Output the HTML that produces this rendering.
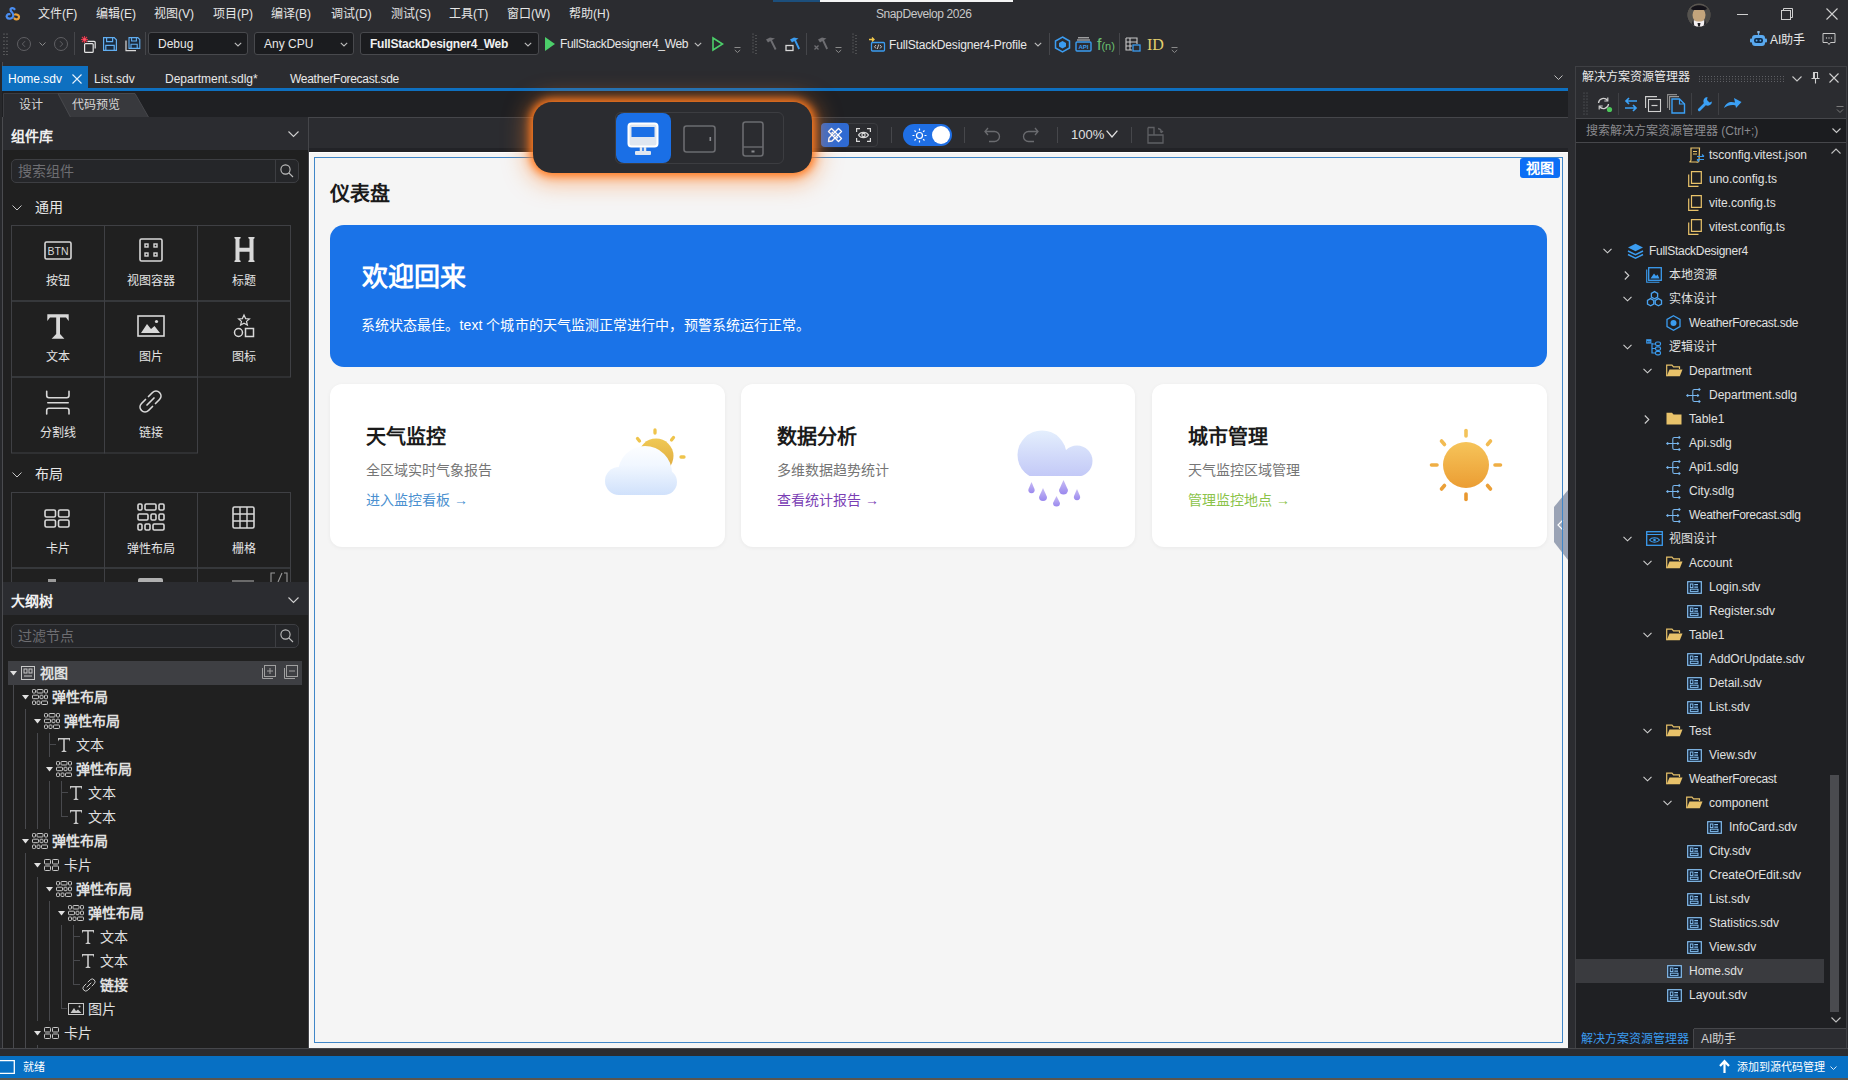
<!DOCTYPE html>
<html lang="zh-CN"><head><meta charset="utf-8"><title>SnapDevelop</title>
<style>
*{margin:0;padding:0;box-sizing:border-box}
html,body{width:1853px;height:1080px;overflow:hidden}
body{background:#2b2c30;font-family:"Liberation Sans",sans-serif;font-size:12px;color:#dcdcdc;position:relative}
.a{position:absolute}
.t{position:absolute;white-space:nowrap;line-height:1}
svg{position:absolute;overflow:visible}

</style></head><body>
<!-- title bar -->
<div class="a" style="left:773px;top:0;width:47px;height:2px;background:#1c4f7c"></div>
<div class="a" style="left:820px;top:0;width:193px;height:2px;background:#f4f4f4"></div>
<svg style="left:5px;top:7px" width="16" height="14" viewBox="0 0 16 14">
 <path d="M9.5 2.2 C8.5 0.6 5.2 0.8 5.6 3.2 C5.9 5 8.5 5.5 8.3 8.5 C8.1 11.8 3.5 12.6 2 10.5 C0.8 8.8 2.5 6.8 4.5 7.2" fill="none" stroke="#4a8df0" stroke-width="2.2" stroke-linecap="round"/>
 <path d="M10 7.5 C13.5 7.2 14.5 9.5 13.8 11 C13 12.8 10.5 12.8 9.5 11.5" fill="none" stroke="#e8a13a" stroke-width="2.2" stroke-linecap="round"/>
</svg>
<div class="t" style="left:38px;top:8px;font-size:12px;color:#e6e6e6">文件(F)</div>
<div class="t" style="left:96px;top:8px;font-size:12px;color:#e6e6e6">编辑(E)</div>
<div class="t" style="left:154px;top:8px;font-size:12px;color:#e6e6e6">视图(V)</div>
<div class="t" style="left:213px;top:8px;font-size:12px;color:#e6e6e6">项目(P)</div>
<div class="t" style="left:271px;top:8px;font-size:12px;color:#e6e6e6">编译(B)</div>
<div class="t" style="left:331px;top:8px;font-size:12px;color:#e6e6e6">调试(D)</div>
<div class="t" style="left:391px;top:8px;font-size:12px;color:#e6e6e6">测试(S)</div>
<div class="t" style="left:449px;top:8px;font-size:12px;color:#e6e6e6">工具(T)</div>
<div class="t" style="left:507px;top:8px;font-size:12px;color:#e6e6e6">窗口(W)</div>
<div class="t" style="left:569px;top:8px;font-size:12px;color:#e6e6e6">帮助(H)</div>
<div class="t" style="left:876px;top:8px;font-size:12px;letter-spacing:-0.41px;color:#c8c8c8">SnapDevelop 2026</div>
<!-- avatar -->
<svg style="left:1687px;top:3px" width="24" height="24" viewBox="0 0 24 24"><defs><clipPath id="avc"><circle cx="12" cy="12" r="11.5"/></clipPath></defs>
<g clip-path="url(#avc)"><rect width="24" height="24" fill="#5a5650"/><rect x="0" y="0" width="6" height="24" fill="#55534f"/><rect x="18" y="0" width="6" height="24" fill="#4d4b48"/>
<ellipse cx="12" cy="12" rx="6.5" ry="7.5" fill="#c4a57c"/><path d="M4 6C6 1 18 1 20 6L18 7H6Z" fill="#15131a"/>
<path d="M6 25L7 17C9 19 15 19 17 17L18 25Z" fill="#f4f0f2"/><path d="M10.5 20H13.5L12.5 25H11.5Z" fill="#1a1a1e"/><path d="M3 25L6 17 8 25ZM21 25L18 17 16 25Z" fill="#2a2a2e"/></g></svg>
<!-- window buttons -->
<div class="a" style="left:1737px;top:14px;width:11px;height:1px;background:#d0d0d0"></div>
<svg style="left:1781px;top:8px" width="12" height="12" viewBox="0 0 12 12"><rect x="0.5" y="2.5" width="9" height="9" fill="none" stroke="#d0d0d0"/><path d="M2.5 2.5V0.5H11.5V9.5H9.5" fill="none" stroke="#d0d0d0"/></svg>
<svg style="left:1826px;top:8px" width="12" height="12" viewBox="0 0 12 12"><path d="M0.5 0.5L11.5 11.5M11.5 0.5L0.5 11.5" stroke="#d0d0d0" stroke-width="1.1"/></svg>
<!-- toolbar -->
<svg style="left:3px;top:33px" width="6" height="22" viewBox="0 0 6 22"><g fill="#8a8a8a"><circle cx="1" cy="1" r=".6"/><circle cx="4" cy="1" r=".6"/><circle cx="1" cy="4.5" r=".6"/><circle cx="4" cy="4.5" r=".6"/><circle cx="1" cy="8" r=".6"/><circle cx="4" cy="8" r=".6"/><circle cx="1" cy="11.5" r=".6"/><circle cx="4" cy="11.5" r=".6"/><circle cx="1" cy="15" r=".6"/><circle cx="4" cy="15" r=".6"/><circle cx="1" cy="18.5" r=".6"/><circle cx="4" cy="18.5" r=".6"/><circle cx="1" cy="21.5" r=".6"/><circle cx="4" cy="21.5" r=".6"/></g></svg>
<svg style="left:17px;top:37px" width="14" height="14" viewBox="0 0 14 14"><circle cx="7" cy="7" r="6.5" fill="none" stroke="#5f5f63"/><path d="M8 4.2L5.3 7 8 9.8" fill="none" stroke="#5f5f63"/></svg>
<svg style="left:39px;top:42px" width="7" height="5" viewBox="0 0 7 5"><path d="M.5 .5L3.5 3.5 6.5 .5" fill="none" stroke="#8a8a8a"/></svg>
<svg style="left:54px;top:37px" width="14" height="14" viewBox="0 0 14 14"><circle cx="7" cy="7" r="6.5" fill="none" stroke="#5f5f63"/><path d="M6 4.2L8.7 7 6 9.8" fill="none" stroke="#5f5f63"/></svg>
<div class="a" style="left:74px;top:32px;width:1px;height:23px;background:#45464a"></div>
<svg style="left:80px;top:35px" width="17" height="18" viewBox="0 0 17 18"><g stroke="#e0364a" stroke-width="1.1"><path d="M4.5 1V8M1 4.5H8M2 2L7 7M7 2L2 7"/></g><circle cx="4.5" cy="4.5" r="1.2" fill="#ff5a6a"/><rect x="4.6" y="8.6" width="8.6" height="8.8" rx="1" fill="none" stroke="#e4e4e4" stroke-width="1.2"/><path d="M7.5 6.4H14.2Q15.2 6.4 15.2 7.4V13.4" fill="none" stroke="#e4e4e4" stroke-width="1.2"/></svg>
<svg style="left:102px;top:36px" width="16" height="16" viewBox="0 0 16 16"><path d="M1.6 1.6H12.2L14.4 3.8V14.4H1.6Z" fill="#1b2a3c" stroke="#62aef0" stroke-width="1.2"/><path d="M4.6 1.8V5.6H10.6V1.8M3.8 14.2V9.4H12.2V14.2" fill="none" stroke="#62aef0" stroke-width="1.2"/></svg>
<svg style="left:124px;top:36px" width="17" height="16" viewBox="0 0 17 16"><path d="M5 1.6H13.8L15.8 3.6V12.4H5Z" fill="#1b2a3c" stroke="#62aef0" stroke-width="1.1"/><path d="M7.6 1.8V5H12.4V1.8M7 12.2V8.2H13.2V12.2" fill="none" stroke="#62aef0" stroke-width="1.1"/><path d="M2 4.5V14.6H12" fill="none" stroke="#d8d8d8" stroke-width="1.2"/></svg>
<div class="a" style="left:145px;top:32px;width:1px;height:23px;background:#45464a"></div>
<div class="a" style="left:148px;top:32px;width:100px;height:23px;background:#1b1c1f;border:1px solid #48494d;border-radius:3px"></div>
<div class="t" style="left:158px;top:38px;font-size:12px;color:#e8e8e8">Debug</div>
<svg style="left:234px;top:42px" width="8" height="5" viewBox="0 0 8 5"><path d="M.8 .8L4 4 7.2 .8" fill="none" stroke="#bdbdbd" stroke-width="1.1"/></svg>
<div class="a" style="left:254px;top:32px;width:100px;height:23px;background:#1b1c1f;border:1px solid #48494d;border-radius:3px"></div>
<div class="t" style="left:264px;top:38px;font-size:12px;color:#e8e8e8">Any CPU</div>
<svg style="left:340px;top:42px" width="8" height="5" viewBox="0 0 8 5"><path d="M.8 .8L4 4 7.2 .8" fill="none" stroke="#bdbdbd" stroke-width="1.1"/></svg>
<div class="a" style="left:360px;top:32px;width:179px;height:23px;background:#1b1c1f;border:1px solid #48494d;border-radius:3px"></div>
<div class="t" style="left:370px;top:38px;font-size:12px;font-weight:bold;letter-spacing:-0.23px;color:#f0f0f0">FullStackDesigner4_Web</div>
<svg style="left:524px;top:42px" width="8" height="5" viewBox="0 0 8 5"><path d="M.8 .8L4 4 7.2 .8" fill="none" stroke="#bdbdbd" stroke-width="1.1"/></svg>
<svg style="left:545px;top:37px" width="10" height="14" viewBox="0 0 10 14"><path d="M0 0L10 7 0 14Z" fill="#4ccf6a"/></svg>
<div class="t" style="left:560px;top:38px;font-size:12px;letter-spacing:-0.32px;color:#e8e8e8">FullStackDesigner4_Web</div>
<svg style="left:694px;top:42px" width="8" height="5" viewBox="0 0 8 5"><path d="M.8 .8L4 4 7.2 .8" fill="none" stroke="#bdbdbd" stroke-width="1.1"/></svg>
<svg style="left:712px;top:37px" width="12" height="14" viewBox="0 0 12 14"><path d="M1 1L10.5 7 1 13Z" fill="none" stroke="#4ccf6a" stroke-width="1.6"/></svg>
<svg style="left:734px;top:47px" width="7" height="7" viewBox="0 0 7 7"><path d="M.5 .5H6.5M.8 3L3.5 5.5 6.2 3" fill="none" stroke="#8a8a8a"/></svg>
<svg style="left:752px;top:33px" width="5" height="22" viewBox="0 0 5 22"><g fill="#7a7a7a"><circle cx="1" cy="1" r=".6"/><circle cx="4" cy="2.5" r=".6"/><circle cx="1" cy="4" r=".6"/><circle cx="4" cy="5.5" r=".6"/><circle cx="1" cy="7" r=".6"/><circle cx="4" cy="8.5" r=".6"/><circle cx="1" cy="10" r=".6"/><circle cx="4" cy="11.5" r=".6"/><circle cx="1" cy="13" r=".6"/><circle cx="4" cy="14.5" r=".6"/><circle cx="1" cy="16" r=".6"/><circle cx="4" cy="17.5" r=".6"/><circle cx="1" cy="19" r=".6"/><circle cx="4" cy="20.5" r=".6"/></g></svg>
<svg style="left:764px;top:36px" width="14" height="15" viewBox="0 0 14 15"><path d="M2 3.5L6 1.5 11 2.5 8 4 12.5 13 10.8 14 6.3 5 4 6.5Z" fill="#6e6e72"/></svg>
<svg style="left:785px;top:36px" width="16" height="16" viewBox="0 0 16 16"><path d="M5 3.5L9 1.5 13.5 2.5 11 4 15 12.5 13.3 13.5 9.3 5 7 6.5Z" fill="#3b9cf0"/><rect x="1" y="9.5" width="7" height="5" fill="none" stroke="#d8d8d8" stroke-width="1.3"/></svg>
<div class="a" style="left:806px;top:33px;width:1px;height:22px;background:#45464a"></div>
<svg style="left:813px;top:36px" width="16" height="16" viewBox="0 0 16 16"><path d="M5 3.5L9 1.5 13.5 2.5 11 4 15 12.5 13.3 13.5 9.3 5 7 6.5Z" fill="#6e6e72"/><path d="M1.5 9.5L5.5 13.5M5.5 9.5L1.5 13.5" stroke="#6e6e72" stroke-width="1.3"/></svg>
<svg style="left:835px;top:47px" width="7" height="7" viewBox="0 0 7 7"><path d="M.5 .5H6.5M.8 3L3.5 5.5 6.2 3" fill="none" stroke="#8a8a8a"/></svg>
<svg style="left:852px;top:33px" width="5" height="22" viewBox="0 0 5 22"><g fill="#7a7a7a"><circle cx="1" cy="1" r=".6"/><circle cx="4" cy="2.5" r=".6"/><circle cx="1" cy="4" r=".6"/><circle cx="4" cy="5.5" r=".6"/><circle cx="1" cy="7" r=".6"/><circle cx="4" cy="8.5" r=".6"/><circle cx="1" cy="10" r=".6"/><circle cx="4" cy="11.5" r=".6"/><circle cx="1" cy="13" r=".6"/><circle cx="4" cy="14.5" r=".6"/><circle cx="1" cy="16" r=".6"/><circle cx="4" cy="17.5" r=".6"/><circle cx="1" cy="19" r=".6"/><circle cx="4" cy="20.5" r=".6"/></g></svg>
<svg style="left:868px;top:36px" width="18" height="16" viewBox="0 0 18 16"><path d="M1 3.5H6M4 1.5L6 3.5 4 5.5" fill="none" stroke="#f2c94c" stroke-width="1.3"/><rect x="3.5" y="6.5" width="13" height="8.5" rx="1" fill="none" stroke="#3b9cf0" stroke-width="1.3"/><path d="M8 9L6.5 10.8 8 12.5M12 9L13.5 10.8 12 12.5M10.7 8.5L9.3 13" fill="none" stroke="#d8d8d8" stroke-width=".9"/></svg>
<div class="t" style="left:889px;top:39px;font-size:12px;letter-spacing:-0.17px;color:#e8e8e8">FullStackDesigner4-Profile</div>
<svg style="left:1034px;top:42px" width="8" height="5" viewBox="0 0 8 5"><path d="M.8 .8L4 4 7.2 .8" fill="none" stroke="#bdbdbd" stroke-width="1.1"/></svg>
<div class="a" style="left:1049px;top:33px;width:1px;height:22px;background:#45464a"></div>
<svg style="left:1054px;top:36px" width="17" height="17" viewBox="0 0 17 17"><path d="M8.5 1L15.5 5V12L8.5 16 1.5 12V5Z" fill="none" stroke="#3b9cf0" stroke-width="1.5"/><path d="M8.5 5L12 7V10.5L8.5 12.5 5 10.5V7Z" fill="#3b9cf0"/></svg>
<svg style="left:1075px;top:37px" width="17" height="15" viewBox="0 0 17 15"><path d="M3 .8H14M2 3H15" stroke="#d0d0d0" stroke-width="1"/><rect x="1" y="5" width="15" height="9" rx="1" fill="none" stroke="#3b9cf0" stroke-width="1.4"/><text x="8.5" y="12.3" font-size="6" font-family="Liberation Sans" font-weight="bold" fill="#3b9cf0" text-anchor="middle">API</text></svg>
<div class="t" style="left:1097px;top:37px;font-size:16px;color:#6cc070">f<span style="font-size:11px">(n)</span></div>
<div class="a" style="left:1119px;top:33px;width:1px;height:22px;background:#45464a"></div>
<svg style="left:1125px;top:37px" width="16" height="15" viewBox="0 0 16 15"><path d="M1 1H12V7M1 1V13H7M1 5H12M1 9H7M5 1V13" fill="none" stroke="#c8c8c8" stroke-width="1.1"/><rect x="8" y="8" width="7" height="6" fill="none" stroke="#3b9cf0" stroke-width="1.3"/></svg>
<div class="t" style="left:1147px;top:37px;font-size:16px;font-family:'Liberation Serif',serif;color:#e3cf6e">ID</div>
<svg style="left:1171px;top:47px" width="7" height="7" viewBox="0 0 7 7"><path d="M.5 .5H6.5M.8 3L3.5 5.5 6.2 3" fill="none" stroke="#8a8a8a"/></svg>
<!-- AI helper -->
<svg style="left:1750px;top:31px" width="17" height="16" viewBox="0 0 17 16"><rect x="7.3" y="0" width="2.4" height="2.2" fill="#8fb8dc"/><path d="M8.5 2V4" stroke="#5aaaf0" stroke-width="1.2"/><rect x="2" y="4" width="13" height="11" rx="3" fill="#5aaaf0"/><rect x="0" y="7.5" width="2.5" height="4" rx="1" fill="#5aaaf0"/><rect x="14.5" y="7.5" width="2.5" height="4" rx="1" fill="#5aaaf0"/><rect x="4" y="7" width="9" height="5" rx="2.2" fill="#0f2d4c"/><circle cx="6.6" cy="9.5" r=".9" fill="#5aaaf0"/><circle cx="10.4" cy="9.5" r=".9" fill="#5aaaf0"/></svg>
<div class="t" style="left:1770px;top:34px;font-size:12px;color:#e8e8e8">AI助手</div>
<svg style="left:1822px;top:33px" width="14" height="13" viewBox="0 0 14 13"><path d="M1 .5H13V9.5H8.5L7 11.5 5.5 9.5H1Z" fill="none" stroke="#c8c8c8"/><g fill="#c8c8c8"><circle cx="4.5" cy="5" r=".7"/><circle cx="7" cy="5" r=".7"/><circle cx="9.5" cy="5" r=".7"/></g></svg>
<!-- document tabs -->
<div class="a" style="left:0;top:62px;width:2px;height:987px;background:#27282b"></div><div class="a" style="left:2px;top:62px;width:1px;height:987px;background:#4a4b4f"></div>
<div class="a" style="left:2px;top:66px;width:86px;height:22px;background:#0e70c0"></div>
<div class="t" style="left:8px;top:73px;font-size:12px;color:#ffffff">Home.sdv</div>
<svg style="left:72px;top:74px" width="10" height="10" viewBox="0 0 10 10"><path d="M.5 .5L9.5 9.5M9.5 .5L.5 9.5" stroke="#e8f2fb" stroke-width="1.1"/></svg>
<div class="t" style="left:94px;top:73px;font-size:12px;color:#e8e8e8">List.sdv</div>
<div class="t" style="left:165px;top:73px;font-size:12px;color:#e8e8e8">Department.sdlg*</div>
<div class="t" style="left:290px;top:73px;font-size:12px;letter-spacing:-0.29px;color:#e8e8e8">WeatherForecast.sde</div>
<svg style="left:1554px;top:75px" width="9" height="5" viewBox="0 0 9 5"><path d="M.5 .5L4.5 4.5 8.5 .5" fill="none" stroke="#bdbdbd" stroke-width="1"/></svg>
<div class="a" style="left:2px;top:88px;width:1566px;height:3px;background:#0e70c0"></div>
<!-- design/code row -->
<div class="a" style="left:2px;top:91px;width:1566px;height:26px;background:#1f2023"></div>
<svg style="left:2px;top:92px" width="150" height="26" viewBox="0 0 150 26">
 <path d="M1.5 26V1.5H56L69 26Z" fill="#2b2c30" stroke="#3c3d41"/>
 <path d="M56 1.5H133L147 26H69Z" fill="#38393d" stroke="#46474b"/>
</svg>
<div class="t" style="left:19px;top:99px;font-size:12px;color:#d8d8d8">设计</div>
<div class="t" style="left:72px;top:99px;font-size:12px;color:#d8d8d8">代码预览</div>
<div class="a" style="left:71px;top:117px;width:1497px;height:1px;background:#45464a"></div>
<!-- left panel -->
<div class="a" style="left:3px;top:118px;width:305px;height:930px;background:#202020"></div>
<div class="a" style="left:308px;top:117px;width:1px;height:931px;background:#45464a"></div>
<div class="a" style="left:3px;top:117px;width:305px;height:33px;background:#2b2c30"></div>
<div class="t" style="left:11px;top:129px;font-size:14px;font-weight:bold;color:#f0f0f0">组件库</div>
<svg style="left:288px;top:131px" width="11" height="6" viewBox="0 0 11 6"><path d="M.5 .5L5.5 5.5 10.5 .5" fill="none" stroke="#d0d0d0" stroke-width="1.1"/></svg>
<div class="a" style="left:11px;top:159px;width:288px;height:24px;background:#252629;border:1px solid #3d3e42;border-radius:5px"></div>
<div class="a" style="left:275px;top:160px;width:1px;height:22px;background:#3d3e42"></div>
<div class="t" style="left:18px;top:164px;font-size:14px;color:#6e6e72">搜索组件</div>
<svg style="left:280px;top:164px" width="14" height="14" viewBox="0 0 14 14"><circle cx="5.5" cy="5.5" r="4.6" fill="none" stroke="#c0c0c0" stroke-width="1.1"/><path d="M8.8 8.8L13 13" stroke="#c0c0c0" stroke-width="1.1"/></svg>
<svg style="left:12px;top:205px" width="10" height="6" viewBox="0 0 10 6"><path d="M.5 .5L5 5 9.5 .5" fill="none" stroke="#c8c8c8" stroke-width="1"/></svg>
<div class="t" style="left:35px;top:200px;font-size:14px;color:#e8e8e8">通用</div>
<div class="a" style="left:0;top:0;width:310px;height:582px;overflow:hidden"><svg style="left:0;top:0" width="310" height="600" viewBox="0 0 310 600"><rect x="11.5" y="225.5" width="93.0" height="75.5" fill="none" stroke="#3f4044"/><rect x="104.5" y="225.5" width="93.0" height="75.5" fill="none" stroke="#3f4044"/><rect x="197.5" y="225.5" width="93.0" height="75.5" fill="none" stroke="#3f4044"/><rect x="11.5" y="301" width="93.0" height="76" fill="none" stroke="#3f4044"/><rect x="104.5" y="301" width="93.0" height="76" fill="none" stroke="#3f4044"/><rect x="197.5" y="301" width="93.0" height="76" fill="none" stroke="#3f4044"/><rect x="11.5" y="377" width="93.0" height="76" fill="none" stroke="#3f4044"/><rect x="104.5" y="377" width="93.0" height="76" fill="none" stroke="#3f4044"/><rect x="11.5" y="492.5" width="93.0" height="75.5" fill="none" stroke="#3f4044"/><rect x="104.5" y="492.5" width="93.0" height="75.5" fill="none" stroke="#3f4044"/><rect x="197.5" y="492.5" width="93.0" height="75.5" fill="none" stroke="#3f4044"/><rect x="11.5" y="568" width="93.0" height="75" fill="none" stroke="#3f4044"/><rect x="104.5" y="568" width="93.0" height="75" fill="none" stroke="#3f4044"/><rect x="197.5" y="568" width="93.0" height="75" fill="none" stroke="#3f4044"/></svg>
<svg style="left:44px;top:241px" width="28" height="19" viewBox="0 0 28 19"><rect x="1" y="1" width="26" height="17" rx="1.5" fill="none" stroke="#d8d8d8" stroke-width="1.6"/><text x="14" y="14" font-size="10.5" font-family="Liberation Sans" fill="#d8d8d8" text-anchor="middle">BTN</text></svg>
<svg style="left:139px;top:238px" width="24" height="24" viewBox="0 0 24 24"><rect x="1" y="1" width="22" height="22" rx="1.5" fill="none" stroke="#d8d8d8" stroke-width="1.6"/><g fill="none" stroke="#d8d8d8" stroke-width="1.4"><rect x="6" y="6" width="3" height="3"/><rect x="15" y="6" width="3" height="3"/><rect x="6" y="15" width="3" height="3"/><rect x="15" y="15" width="3" height="3"/></g></svg>
<svg style="left:233.7px;top:237.4px" width="21" height="25" viewBox="0 0 20.3 24.8"><path d="M0.2 0H6.3V1.2L5.2 1.9V10.7H15.1V1.9L14 1.2V0H20.1V1.2L19.1 1.9V22.9L20.1 23.6V24.8H14V23.6L15.1 22.9V14.7H5.2V22.9L6.3 23.6V24.8H0.2V23.6L1.2 22.9V1.9L0.2 1.2Z" fill="#d8d8d8"/></svg>
<svg style="left:47px;top:313.7px" width="22" height="25" viewBox="0 0 22 24.6"><path d="M0.3 0H21.7V6.8L19 3.4H13V19.8L17.4 24.6H4.6L9.2 19.8V3.4H3L0.3 6.8Z" fill="#d8d8d8"/></svg>
<svg style="left:137px;top:315px" width="28" height="22" viewBox="0 0 28 22"><rect x="1" y="1" width="26" height="20" fill="none" stroke="#d8d8d8" stroke-width="1.6"/><path d="M4 18L10 9 14 14 17.5 11 23 18Z" fill="#d8d8d8"/><circle cx="19.5" cy="6.5" r="1.6" fill="#d8d8d8"/></svg>
<svg style="left:233px;top:314px" width="22" height="24" viewBox="0 0 22 24"><path d="M11 1L12.6 4.6 16.4 4.9 13.5 7.4 14.4 11.1 11 9.2 7.6 11.1 8.5 7.4 5.6 4.9 9.4 4.6Z" fill="none" stroke="#d8d8d8" stroke-width="1.2"/><circle cx="5.5" cy="18.5" r="4" fill="none" stroke="#d8d8d8" stroke-width="1.5"/><rect x="12.5" y="14.5" width="8" height="8" fill="none" stroke="#d8d8d8" stroke-width="1.5"/></svg>
<svg style="left:45px;top:390px" width="26" height="26" viewBox="0 0 26 26"><path d="M1.7 1.3V5.5Q1.7 7.7 3.9 7.7H21.8Q24 7.7 24 5.5V1.3M2.8 12.7H23.2M1.7 24V20.5Q1.7 18.3 3.9 18.3H21.8Q24 18.3 24 20.5V24" fill="none" stroke="#d8d8d8" stroke-width="1.6" stroke-linecap="round"/></svg>
<svg style="left:138px;top:389px" width="25" height="25" viewBox="0 0 25 25"><path d="M10.5 7.5L14.5 3.5A4.5 4.5 0 0 1 21.5 10.5L17.5 14.5M14.5 17.5L10.5 21.5A4.5 4.5 0 0 1 3.5 14.5L7.5 10.5M9 16L16 9" fill="none" stroke="#d8d8d8" stroke-width="1.7" stroke-linecap="round"/></svg>
<div class="t" style="left:46px;top:275px;font-size:12px;color:#e4e4e4">按钮</div>
<div class="t" style="left:127px;top:275px;font-size:12px;color:#e4e4e4">视图容器</div>
<div class="t" style="left:232px;top:275px;font-size:12px;color:#e4e4e4">标题</div>
<div class="t" style="left:46px;top:351px;font-size:12px;color:#e4e4e4">文本</div>
<div class="t" style="left:139px;top:351px;font-size:12px;color:#e4e4e4">图片</div>
<div class="t" style="left:232px;top:351px;font-size:12px;color:#e4e4e4">图标</div>
<div class="t" style="left:40px;top:427px;font-size:12px;color:#e4e4e4">分割线</div>
<div class="t" style="left:139px;top:427px;font-size:12px;color:#e4e4e4">链接</div>
<svg style="left:12px;top:472px" width="10" height="6" viewBox="0 0 10 6"><path d="M.5 .5L5 5 9.5 .5" fill="none" stroke="#c8c8c8" stroke-width="1"/></svg>
<div class="t" style="left:35px;top:467px;font-size:14px;color:#e8e8e8">布局</div>
<svg style="left:44px;top:509px" width="26" height="19" viewBox="0 0 26 19"><g fill="none" stroke="#d8d8d8" stroke-width="1.6"><rect x="1" y="1" width="10.5" height="7" rx="1.5"/><rect x="14.5" y="1" width="10.5" height="7" rx="1.5"/><rect x="1" y="11" width="10.5" height="7" rx="1.5"/><rect x="14.5" y="11" width="10.5" height="7" rx="1.5"/></g></svg>
<svg style="left:137px;top:503px" width="28" height="28" viewBox="0 0 28 28"><g fill="none" stroke="#d8d8d8" stroke-width="1.6"><rect x="1" y="1" width="4" height="6" rx="1.2"/><rect x="8" y="1" width="11" height="6" rx="1.2"/><rect x="22" y="1" width="5" height="6" rx="1.2"/><rect x="1" y="11" width="10" height="6" rx="1.2"/><rect x="14" y="11" width="5" height="6" rx="1.2"/><rect x="22" y="11" width="5" height="6" rx="1.2"/><rect x="1" y="21" width="4" height="6" rx="1.2"/><rect x="8" y="21" width="5" height="6" rx="1.2"/><rect x="16" y="21" width="11" height="6" rx="1.2"/></g></svg>
<svg style="left:232px;top:506px" width="23" height="23" viewBox="0 0 23 23"><rect x="1" y="1" width="21" height="21" rx="1.5" fill="none" stroke="#d8d8d8" stroke-width="1.6"/><path d="M8 1V22M15 1V22M1 8H22M1 15H22" stroke="#d8d8d8" stroke-width="1.4"/></svg>
<div class="t" style="left:46px;top:543px;font-size:12px;color:#e4e4e4">卡片</div>
<div class="t" style="left:127px;top:543px;font-size:12px;color:#e4e4e4">弹性布局</div>
<div class="t" style="left:232px;top:543px;font-size:12px;color:#e4e4e4">栅格</div>
<div class="a" style="left:48px;top:579px;width:8px;height:3px;background:#9a9a9a"></div>
<div class="a" style="left:138px;top:578px;width:25px;height:4px;border-radius:2px 2px 0 0;background:#b0b0b0"></div>
<div class="a" style="left:232px;top:580px;width:22px;height:2px;background:#6a6a6a"></div>
<svg style="left:270px;top:572px" width="18" height="10" viewBox="0 0 18 10"><path d="M1 10V1H5M8 10L12 1M14 1H17V10" fill="none" stroke="#9a9a9a" stroke-width="1.1"/></svg>
</div>
<div class="a" style="left:3px;top:582px;width:305px;height:33px;background:#2b2c30"></div>
<div class="t" style="left:11px;top:594px;font-size:14px;font-weight:bold;color:#f0f0f0">大纲树</div>
<svg style="left:288px;top:597px" width="11" height="6" viewBox="0 0 11 6"><path d="M.5 .5L5.5 5.5 10.5 .5" fill="none" stroke="#d0d0d0" stroke-width="1.1"/></svg>
<div class="a" style="left:11px;top:624px;width:288px;height:24px;background:#252629;border:1px solid #3d3e42;border-radius:5px"></div>
<div class="a" style="left:275px;top:625px;width:1px;height:22px;background:#3d3e42"></div>
<div class="t" style="left:18px;top:629px;font-size:14px;color:#6e6e72">过滤节点</div>
<svg style="left:280px;top:629px" width="14" height="14" viewBox="0 0 14 14"><circle cx="5.5" cy="5.5" r="4.6" fill="none" stroke="#c0c0c0" stroke-width="1.1"/><path d="M8.8 8.8L13 13" stroke="#c0c0c0" stroke-width="1.1"/></svg>
<div class="a" style="left:8px;top:661px;width:294px;height:24px;background:#3e3f43"></div>
<svg style="left:10px;top:671px" width="7" height="5" viewBox="0 0 7 5"><path d="M0 0H7L3.5 4.5Z" fill="#e0e0e0"/></svg>
<svg style="left:21px;top:666px" width="14" height="14" viewBox="0 0 14 14"><rect x=".5" y=".5" width="13" height="13" fill="none" stroke="#c8c8c8" stroke-width="1"/><rect x="3" y="3" width="3" height="4" fill="none" stroke="#c8c8c8" stroke-width="1"/><rect x="8" y="3" width="3" height="4" fill="none" stroke="#c8c8c8" stroke-width="1"/><path d="M3 10H11" stroke="#c8c8c8" stroke-width="1"/></svg>
<div class="t" style="left:40px;top:666px;font-size:14px;font-weight:bold;color:#e0e0e0">视图</div>
<svg style="left:22px;top:695px" width="7" height="5" viewBox="0 0 7 5"><path d="M0 0H7L3.5 4.5Z" fill="#e0e0e0"/></svg>
<svg style="left:32px;top:689px" width="16" height="16" viewBox="0 0 16 16"><g fill="none" stroke="#c8c8c8" stroke-width="1"><rect x=".5" y=".5" width="3" height="3.5" rx=".8"/><rect x="5" y=".5" width="6" height="3.5" rx=".8"/><rect x="12.5" y=".5" width="3" height="3.5" rx=".8"/><rect x=".5" y="6.2" width="6" height="3.5" rx=".8"/><rect x="8" y="6.2" width="3" height="3.5" rx=".8"/><rect x="12.5" y="6.2" width="3" height="3.5" rx=".8"/><rect x=".5" y="12" width="3" height="3.5" rx=".8"/><rect x="5" y="12" width="3" height="3.5" rx=".8"/><rect x="9.5" y="12" width="6" height="3.5" rx=".8"/></g></svg>
<div class="t" style="left:52px;top:690px;font-size:14px;font-weight:bold;color:#e0e0e0">弹性布局</div>
<svg style="left:34px;top:719px" width="7" height="5" viewBox="0 0 7 5"><path d="M0 0H7L3.5 4.5Z" fill="#e0e0e0"/></svg>
<svg style="left:44px;top:713px" width="16" height="16" viewBox="0 0 16 16"><g fill="none" stroke="#c8c8c8" stroke-width="1"><rect x=".5" y=".5" width="3" height="3.5" rx=".8"/><rect x="5" y=".5" width="6" height="3.5" rx=".8"/><rect x="12.5" y=".5" width="3" height="3.5" rx=".8"/><rect x=".5" y="6.2" width="6" height="3.5" rx=".8"/><rect x="8" y="6.2" width="3" height="3.5" rx=".8"/><rect x="12.5" y="6.2" width="3" height="3.5" rx=".8"/><rect x=".5" y="12" width="3" height="3.5" rx=".8"/><rect x="5" y="12" width="3" height="3.5" rx=".8"/><rect x="9.5" y="12" width="6" height="3.5" rx=".8"/></g></svg>
<div class="t" style="left:64px;top:714px;font-size:14px;font-weight:bold;color:#e0e0e0">弹性布局</div>
<svg style="left:58px;top:738px" width="12" height="14" viewBox="0 0 12 14"><path d="M0 0H12V3.6L10.9 1.5H6.8V12.3L8.9 14H3.1L5.2 12.3V1.5H1.1L0 3.6Z" fill="#c8c8c8"/></svg>
<div class="t" style="left:76px;top:738px;font-size:14px;font-weight:normal;color:#e0e0e0">文本</div>
<svg style="left:46px;top:767px" width="7" height="5" viewBox="0 0 7 5"><path d="M0 0H7L3.5 4.5Z" fill="#e0e0e0"/></svg>
<svg style="left:56px;top:761px" width="16" height="16" viewBox="0 0 16 16"><g fill="none" stroke="#c8c8c8" stroke-width="1"><rect x=".5" y=".5" width="3" height="3.5" rx=".8"/><rect x="5" y=".5" width="6" height="3.5" rx=".8"/><rect x="12.5" y=".5" width="3" height="3.5" rx=".8"/><rect x=".5" y="6.2" width="6" height="3.5" rx=".8"/><rect x="8" y="6.2" width="3" height="3.5" rx=".8"/><rect x="12.5" y="6.2" width="3" height="3.5" rx=".8"/><rect x=".5" y="12" width="3" height="3.5" rx=".8"/><rect x="5" y="12" width="3" height="3.5" rx=".8"/><rect x="9.5" y="12" width="6" height="3.5" rx=".8"/></g></svg>
<div class="t" style="left:76px;top:762px;font-size:14px;font-weight:bold;color:#e0e0e0">弹性布局</div>
<svg style="left:70px;top:786px" width="12" height="14" viewBox="0 0 12 14"><path d="M0 0H12V3.6L10.9 1.5H6.8V12.3L8.9 14H3.1L5.2 12.3V1.5H1.1L0 3.6Z" fill="#c8c8c8"/></svg>
<div class="t" style="left:88px;top:786px;font-size:14px;font-weight:normal;color:#e0e0e0">文本</div>
<svg style="left:70px;top:810px" width="12" height="14" viewBox="0 0 12 14"><path d="M0 0H12V3.6L10.9 1.5H6.8V12.3L8.9 14H3.1L5.2 12.3V1.5H1.1L0 3.6Z" fill="#c8c8c8"/></svg>
<div class="t" style="left:88px;top:810px;font-size:14px;font-weight:normal;color:#e0e0e0">文本</div>
<svg style="left:22px;top:839px" width="7" height="5" viewBox="0 0 7 5"><path d="M0 0H7L3.5 4.5Z" fill="#e0e0e0"/></svg>
<svg style="left:32px;top:833px" width="16" height="16" viewBox="0 0 16 16"><g fill="none" stroke="#c8c8c8" stroke-width="1"><rect x=".5" y=".5" width="3" height="3.5" rx=".8"/><rect x="5" y=".5" width="6" height="3.5" rx=".8"/><rect x="12.5" y=".5" width="3" height="3.5" rx=".8"/><rect x=".5" y="6.2" width="6" height="3.5" rx=".8"/><rect x="8" y="6.2" width="3" height="3.5" rx=".8"/><rect x="12.5" y="6.2" width="3" height="3.5" rx=".8"/><rect x=".5" y="12" width="3" height="3.5" rx=".8"/><rect x="5" y="12" width="3" height="3.5" rx=".8"/><rect x="9.5" y="12" width="6" height="3.5" rx=".8"/></g></svg>
<div class="t" style="left:52px;top:834px;font-size:14px;font-weight:bold;color:#e0e0e0">弹性布局</div>
<svg style="left:34px;top:863px" width="7" height="5" viewBox="0 0 7 5"><path d="M0 0H7L3.5 4.5Z" fill="#e0e0e0"/></svg>
<svg style="left:44px;top:859px" width="15" height="12" viewBox="0 0 15 12"><g fill="none" stroke="#c8c8c8" stroke-width="1"><rect x=".5" y=".5" width="6" height="4.5" rx=".8"/><rect x="8.5" y=".5" width="6" height="4.5" rx=".8"/><rect x=".5" y="7" width="6" height="4.5" rx=".8"/><rect x="8.5" y="7" width="6" height="4.5" rx=".8"/></g></svg>
<div class="t" style="left:64px;top:858px;font-size:14px;font-weight:normal;color:#e0e0e0">卡片</div>
<svg style="left:46px;top:887px" width="7" height="5" viewBox="0 0 7 5"><path d="M0 0H7L3.5 4.5Z" fill="#e0e0e0"/></svg>
<svg style="left:56px;top:881px" width="16" height="16" viewBox="0 0 16 16"><g fill="none" stroke="#c8c8c8" stroke-width="1"><rect x=".5" y=".5" width="3" height="3.5" rx=".8"/><rect x="5" y=".5" width="6" height="3.5" rx=".8"/><rect x="12.5" y=".5" width="3" height="3.5" rx=".8"/><rect x=".5" y="6.2" width="6" height="3.5" rx=".8"/><rect x="8" y="6.2" width="3" height="3.5" rx=".8"/><rect x="12.5" y="6.2" width="3" height="3.5" rx=".8"/><rect x=".5" y="12" width="3" height="3.5" rx=".8"/><rect x="5" y="12" width="3" height="3.5" rx=".8"/><rect x="9.5" y="12" width="6" height="3.5" rx=".8"/></g></svg>
<div class="t" style="left:76px;top:882px;font-size:14px;font-weight:bold;color:#e0e0e0">弹性布局</div>
<svg style="left:58px;top:911px" width="7" height="5" viewBox="0 0 7 5"><path d="M0 0H7L3.5 4.5Z" fill="#e0e0e0"/></svg>
<svg style="left:68px;top:905px" width="16" height="16" viewBox="0 0 16 16"><g fill="none" stroke="#c8c8c8" stroke-width="1"><rect x=".5" y=".5" width="3" height="3.5" rx=".8"/><rect x="5" y=".5" width="6" height="3.5" rx=".8"/><rect x="12.5" y=".5" width="3" height="3.5" rx=".8"/><rect x=".5" y="6.2" width="6" height="3.5" rx=".8"/><rect x="8" y="6.2" width="3" height="3.5" rx=".8"/><rect x="12.5" y="6.2" width="3" height="3.5" rx=".8"/><rect x=".5" y="12" width="3" height="3.5" rx=".8"/><rect x="5" y="12" width="3" height="3.5" rx=".8"/><rect x="9.5" y="12" width="6" height="3.5" rx=".8"/></g></svg>
<div class="t" style="left:88px;top:906px;font-size:14px;font-weight:bold;color:#e0e0e0">弹性布局</div>
<svg style="left:82px;top:930px" width="12" height="14" viewBox="0 0 12 14"><path d="M0 0H12V3.6L10.9 1.5H6.8V12.3L8.9 14H3.1L5.2 12.3V1.5H1.1L0 3.6Z" fill="#c8c8c8"/></svg>
<div class="t" style="left:100px;top:930px;font-size:14px;font-weight:normal;color:#e0e0e0">文本</div>
<svg style="left:82px;top:954px" width="12" height="14" viewBox="0 0 12 14"><path d="M0 0H12V3.6L10.9 1.5H6.8V12.3L8.9 14H3.1L5.2 12.3V1.5H1.1L0 3.6Z" fill="#c8c8c8"/></svg>
<div class="t" style="left:100px;top:954px;font-size:14px;font-weight:normal;color:#e0e0e0">文本</div>
<svg style="left:82px;top:978px" width="14" height="14" viewBox="0 0 14 14"><path d="M6 4L8.2 1.8A2.6 2.6 0 0 1 12.2 5.8L10 8M8 10L5.8 12.2A2.6 2.6 0 0 1 1.8 8.2L4 6M5 9L9 5" fill="none" stroke="#c8c8c8" stroke-width="1" stroke-linecap="round"/></svg>
<div class="t" style="left:100px;top:978px;font-size:14px;font-weight:bold;color:#e0e0e0">链接</div>
<svg style="left:68px;top:1003px" width="16" height="12" viewBox="0 0 16 12"><rect x=".5" y=".5" width="15" height="11" fill="none" stroke="#c8c8c8" stroke-width="1"/><path d="M2.5 10L6 5 8 8 10 6.5 13.5 10Z" fill="#c8c8c8"/><circle cx="11.5" cy="3.5" r="1" fill="#c8c8c8"/></svg>
<div class="t" style="left:88px;top:1002px;font-size:14px;font-weight:normal;color:#e0e0e0">图片</div>
<svg style="left:34px;top:1031px" width="7" height="5" viewBox="0 0 7 5"><path d="M0 0H7L3.5 4.5Z" fill="#e0e0e0"/></svg>
<svg style="left:44px;top:1027px" width="15" height="12" viewBox="0 0 15 12"><g fill="none" stroke="#c8c8c8" stroke-width="1"><rect x=".5" y=".5" width="6" height="4.5" rx=".8"/><rect x="8.5" y=".5" width="6" height="4.5" rx=".8"/><rect x=".5" y="7" width="6" height="4.5" rx=".8"/><rect x="8.5" y="7" width="6" height="4.5" rx=".8"/></g></svg>
<div class="t" style="left:64px;top:1026px;font-size:14px;font-weight:normal;color:#e0e0e0">卡片</div>
<div class="a" style="left:13px;top:685px;width:1px;height:363px;background:#48494d"></div>
<div class="a" style="left:25px;top:709px;width:1px;height:120px;background:#48494d"></div>
<div class="a" style="left:37px;top:733px;width:1px;height:96px;background:#48494d"></div>
<div class="a" style="left:49px;top:733px;width:1px;height:24px;background:#48494d"></div>
<div class="a" style="left:49px;top:744px;width:7px;height:1px;background:#48494d"></div>
<div class="a" style="left:49px;top:781px;width:1px;height:48px;background:#48494d"></div>
<div class="a" style="left:61px;top:781px;width:1px;height:24px;background:#48494d"></div>
<div class="a" style="left:61px;top:792px;width:7px;height:1px;background:#48494d"></div>
<div class="a" style="left:61px;top:805px;width:1px;height:12px;background:#48494d"></div>
<div class="a" style="left:61px;top:816px;width:7px;height:1px;background:#48494d"></div>
<div class="a" style="left:25px;top:853px;width:1px;height:195px;background:#48494d"></div>
<div class="a" style="left:37px;top:877px;width:1px;height:144px;background:#48494d"></div>
<div class="a" style="left:49px;top:901px;width:1px;height:120px;background:#48494d"></div>
<div class="a" style="left:61px;top:925px;width:1px;height:72px;background:#48494d"></div>
<div class="a" style="left:73px;top:925px;width:1px;height:24px;background:#48494d"></div>
<div class="a" style="left:73px;top:936px;width:7px;height:1px;background:#48494d"></div>
<div class="a" style="left:73px;top:949px;width:1px;height:24px;background:#48494d"></div>
<div class="a" style="left:73px;top:960px;width:7px;height:1px;background:#48494d"></div>
<div class="a" style="left:73px;top:973px;width:1px;height:12px;background:#48494d"></div>
<div class="a" style="left:73px;top:984px;width:7px;height:1px;background:#48494d"></div>
<div class="a" style="left:61px;top:997px;width:1px;height:12px;background:#48494d"></div>
<div class="a" style="left:61px;top:1008px;width:6px;height:1px;background:#48494d"></div>
<div class="a" style="left:37px;top:1045px;width:1px;height:3px;background:#48494d"></div>
<svg style="left:262px;top:665px" width="14" height="14" viewBox="0 0 14 14"><path d="M.5 3V13.5H11" fill="none" stroke="#a0a0a0"/><rect x="2.5" y=".5" width="11" height="11" fill="none" stroke="#a0a0a0"/><path d="M8 3V9M5 6H11" stroke="#a0a0a0"/></svg>
<svg style="left:284px;top:665px" width="14" height="14" viewBox="0 0 14 14"><path d="M.5 3V13.5H11" fill="none" stroke="#a0a0a0"/><rect x="2.5" y=".5" width="11" height="11" fill="none" stroke="#a0a0a0"/><path d="M5 6H11" stroke="#a0a0a0"/></svg><!-- canvas toolbar -->
<div class="a" style="left:309px;top:118px;width:1259px;height:34px;background:#2b2c30"></div><div class="a" style="left:309px;top:148px;width:1259px;height:4px;background:#222327"></div>
<div class="a" style="left:821px;top:123px;width:57px;height:24px;border:1px solid #3b3c40;border-radius:4px"></div>
<div class="a" style="left:821px;top:123px;width:28px;height:24px;background:#2f6bd3;border-radius:4px"></div>
<svg style="left:827px;top:127px" width="16" height="16" viewBox="0 0 16 16"><g fill="none" stroke="#ffffff" stroke-width="1.4" stroke-linejoin="round"><path d="M1.5 4.5L4.5 1.5 14.5 11.5 11.5 14.5Z"/><path d="M4.5 6.5L6 5M7 9L8.5 7.5M9.5 11.5L11 10"/><path d="M11.5 1.5L14.5 4.5 5 14 1.5 14.5 2 11Z"/></g></svg>
<svg style="left:856px;top:128px" width="15" height="14" viewBox="0 0 15 14"><g fill="none" stroke="#d8d8d8" stroke-width="1.2"><path d="M.6 4V.6H4M11 .6H14.4V4M14.4 10V13.4H11M4 13.4H.6V10"/><path d="M2.5 7C4.5 3.5 10.5 3.5 12.5 7 10.5 10.5 4.5 10.5 2.5 7Z"/><circle cx="7.5" cy="7" r="1.6"/></g></svg>
<div class="a" style="left:891px;top:127px;width:1px;height:16px;background:#46474b"></div>
<div class="a" style="left:903px;top:124px;width:49px;height:22px;background:#1f6fe5;border-radius:11px"></div>
<svg style="left:912px;top:128px" width="15" height="15" viewBox="0 0 15 15"><g stroke="#ffffff" stroke-width="1.2" fill="none"><circle cx="7.5" cy="7.5" r="3"/><path d="M7.5 .5V2.5M7.5 12.5V14.5M.5 7.5H2.5M12.5 7.5H14.5M2.5 2.5L3.9 3.9M11.1 11.1L12.5 12.5M12.5 2.5L11.1 3.9M3.9 11.1L2.5 12.5"/></g></svg>
<div class="a" style="left:932px;top:126px;width:18px;height:18px;background:#ffffff;border-radius:50%"></div>
<div class="a" style="left:964px;top:127px;width:1px;height:16px;background:#46474b"></div>
<svg style="left:984px;top:127px" width="17" height="15" viewBox="0 0 17 15"><path d="M4 1L1 4.5 4 8M1.5 4.5H10.5A5 5 0 0 1 10.5 14.5H5" fill="none" stroke="#6a6b6f" stroke-width="1.3"/></svg>
<svg style="left:1022px;top:127px" width="17" height="15" viewBox="0 0 17 15"><path d="M13 1L16 4.5 13 8M15.5 4.5H6.5A5 5 0 0 0 6.5 14.5H12" fill="none" stroke="#6a6b6f" stroke-width="1.3"/></svg>
<div class="a" style="left:1057px;top:127px;width:1px;height:16px;background:#46474b"></div>
<div class="t" style="left:1071px;top:128px;font-size:13px;color:#e0e0e0">100%</div>
<svg style="left:1106px;top:130px" width="12" height="8" viewBox="0 0 12 8"><path d="M.6 .6L6 7 11.4 .6" fill="none" stroke="#e0e0e0" stroke-width="1.3"/></svg>
<div class="a" style="left:1131px;top:127px;width:1px;height:16px;background:#46474b"></div>
<svg style="left:1147px;top:126px" width="18" height="18" viewBox="0 0 18 18"><g fill="none" stroke="#5f6064" stroke-width="1.3"><path d="M1 1.5H7V9"/><path d="M1 1.5V17H16V9H1"/><path d="M11 2.5A4 4 0 0 1 14.5 6M13 5.5L14.5 6.5 16 5"/></g></svg>
<!-- canvas -->
<div class="a" style="left:309px;top:152px;width:1259px;height:896px;background:#f5f5f5;border-top:1px solid #ffffff;border-left:1px solid #ffffff"></div>
<div class="a" style="left:314px;top:157px;width:1249px;height:886px;border:1px solid #3f86c8"></div>
<div class="a" style="left:1520px;top:158px;width:40px;height:20px;background:#0b6ef5;border-radius:3px"></div>
<div class="t" style="left:1526px;top:161px;font-size:14px;font-weight:bold;color:#ffffff">视图</div>
<div class="t" style="left:330px;top:184px;font-size:20px;font-weight:bold;color:#1a1a1a">仪表盘</div>
<div class="a" style="left:330px;top:225px;width:1217px;height:142px;background:#1a73e8;border-radius:14px"></div>
<div class="t" style="left:362px;top:264px;font-size:26px;font-weight:bold;color:#ffffff">欢迎回来</div>
<div class="t" style="left:361px;top:318px;font-size:14px;letter-spacing:.08px;color:#ffffff">系统状态最佳。text 个城市的天气监测正常进行中，预警系统运行正常。</div>
<!-- cards -->
<div class="a" style="left:330px;top:384px;width:395px;height:163px;background:#ffffff;border-radius:12px;box-shadow:0 1px 4px rgba(0,0,0,.05)"></div>
<div class="a" style="left:741px;top:384px;width:394px;height:163px;background:#ffffff;border-radius:12px;box-shadow:0 1px 4px rgba(0,0,0,.05)"></div>
<div class="a" style="left:1152px;top:384px;width:395px;height:163px;background:#ffffff;border-radius:12px;box-shadow:0 1px 4px rgba(0,0,0,.05)"></div>
<div class="t" style="left:366px;top:427px;font-size:20px;font-weight:bold;color:#1a1a1a">天气监控</div>
<div class="t" style="left:366px;top:463px;font-size:14px;color:#757575">全区域实时气象报告</div>
<div class="t" style="left:366px;top:493px;font-size:14px;color:#4a90d0">进入监控看板 →</div>
<div class="t" style="left:777px;top:427px;font-size:20px;font-weight:bold;color:#1a1a1a">数据分析</div>
<div class="t" style="left:777px;top:463px;font-size:14px;color:#757575">多维数据趋势统计</div>
<div class="t" style="left:777px;top:493px;font-size:14px;color:#7b3fb5">查看统计报告 →</div>
<div class="t" style="left:1188px;top:427px;font-size:20px;font-weight:bold;color:#1a1a1a">城市管理</div>
<div class="t" style="left:1188px;top:463px;font-size:14px;color:#757575">天气监控区域管理</div>
<div class="t" style="left:1188px;top:493px;font-size:14px;color:#8bc34a">管理监控地点 →</div>
<!-- illustrations -->
<svg style="left:600px;top:425px" width="90" height="75" viewBox="600 425 90 75">
 <defs>
  <linearGradient id="sunG" x1="0" y1="438" x2="0" y2="474" gradientUnits="userSpaceOnUse"><stop offset="0" stop-color="#f0c955"/><stop offset="1" stop-color="#dea63c"/></linearGradient>
  <linearGradient id="cloudG" x1="0" y1="445" x2="0" y2="495" gradientUnits="userSpaceOnUse"><stop offset="0" stop-color="#fdfeff"/><stop offset=".4" stop-color="#f1f7ff"/><stop offset="1" stop-color="#d0e1fb"/></linearGradient>
 </defs>
 <g stroke="#efc44c" stroke-width="3.3" stroke-linecap="round">
  <path d="M655 430V433M637.5 438.5L639.5 441M673.5 437.5L671.5 440M681 457H684"/>
 </g>
 <circle cx="656" cy="456" r="17.5" fill="url(#sunG)"/>
 <g fill="url(#cloudG)">
  <circle cx="645" cy="473" r="27"/>
  <circle cx="619" cy="481" r="14"/>
  <circle cx="664" cy="482" r="13"/>
  <rect x="619" y="470" width="45" height="25"/>
 </g>
 <rect x="600" y="495" width="90" height="10" fill="#ffffff"/>
</svg>
<svg style="left:1010px;top:425px" width="90" height="85" viewBox="1010 425 90 85">
 <defs>
  <linearGradient id="rcG" x1="0" y1="430" x2="0" y2="476" gradientUnits="userSpaceOnUse"><stop offset="0" stop-color="#e4effd"/><stop offset="1" stop-color="#c3c9f7"/></linearGradient>
  <linearGradient id="dG" x1="0" y1="0" x2="0" y2="1"><stop offset="0" stop-color="#c8bdf5"/><stop offset="1" stop-color="#9a88ee"/></linearGradient>
 </defs>
 <g fill="url(#rcG)"><circle cx="1042" cy="455" r="24.5"/><circle cx="1077" cy="461" r="15.5"/><rect x="1030" y="455" width="47" height="21"/><circle cx="1034" cy="464" r="12"/></g><rect x="1010" y="476" width="90" height="4" fill="#ffffff"/>
 <g fill="url(#dG)">
  <path d="M1031.5 482L1034.5 489A3.2 3.2 0 1 1 1028.5 489Z"/>
  <path d="M1043 488L1047 497A4 4 0 1 1 1039 497Z"/>
  <path d="M1063.5 480L1068 490A4.5 4.5 0 1 1 1059 490Z"/>
  <path d="M1056.5 496L1060 503A3.5 3.5 0 1 1 1053 503Z"/>
  <path d="M1077 489L1080 496A3.2 3.2 0 1 1 1074 496Z"/>
 </g>
</svg>
<svg style="left:1420px;top:420px" width="95" height="90" viewBox="1420 420 95 90">
 <defs><linearGradient id="sG" x1="0" y1="0" x2="0" y2="1"><stop offset="0" stop-color="#f6c45a"/><stop offset="1" stop-color="#eb9d33"/></linearGradient></defs>
 <g stroke-width="3.6" stroke-linecap="round">
  <path d="M1466 430.5V436" stroke="#f3c35a"/>
  <path d="M1466 494V499.5" stroke="#e9982f"/>
  <path d="M1431.5 465H1437M1495 465H1500.5" stroke="#efae44"/>
  <path d="M1441.5 441L1444.5 444.5M1490.5 441L1487.5 444.5" stroke="#f2bb52"/>
  <path d="M1441.5 489L1444.5 485.5M1490.5 489L1487.5 485.5" stroke="#eba038"/>
 </g>
 <circle cx="1466" cy="465" r="23" fill="url(#sG)"/>
</svg>
<!-- right side collapse tab -->
<svg style="left:1554px;top:490px" width="14" height="70" viewBox="0 0 14 70"><path d="M14 0V70L0 52V17Z" fill="#9aa3b5"/><path d="M9 30L4 35 9 40" fill="none" stroke="#ffffff" stroke-width="1.2"/></svg>
<div class="a" style="left:1562px;top:157px;width:1px;height:886px;background:#3f86c8"></div>
<!-- floating device switcher -->
<div class="a" style="left:533px;top:102px;width:279px;height:71px;background:#2b2c30;border-radius:19px;box-shadow:0 0 9px 3px #ff7a1f, 0 3px 22px 7px rgba(255,125,35,.5)"></div>
<div class="a" style="left:615px;top:112px;width:169px;height:52px;border:1px solid #3c3d41;border-radius:6px"></div>
<div class="a" style="left:616px;top:113px;width:55px;height:50px;background:#1a6fe6;border-radius:8px"></div>
<svg style="left:627px;top:122px" width="32" height="35" viewBox="0 0 32 35"><rect x="1.5" y="1.5" width="29" height="23" rx="3" fill="#dfe6f0" stroke="#ffffff" stroke-width="2"/><rect x="4.5" y="5" width="23" height="10" fill="#1a6fe6"/><path d="M14 25V29M18 25V29" stroke="#dfe6f0" stroke-width="2.5"/><rect x="8" y="29" width="16" height="4" rx="1" fill="#dfe6f0"/></svg>
<svg style="left:683px;top:125px" width="33" height="28" viewBox="0 0 33 28"><rect x="1" y="1" width="31" height="26" rx="2.5" fill="none" stroke="#6b6c70" stroke-width="1.6"/><rect x="26.5" y="12" width="1.6" height="4" fill="#8a8b8f"/></svg>
<svg style="left:742px;top:121px" width="22" height="36" viewBox="0 0 22 36"><rect x="1" y="1" width="20" height="34" rx="2.5" fill="none" stroke="#6b6c70" stroke-width="1.6"/><path d="M1 26H21" stroke="#6b6c70" stroke-width="1.4"/><rect x="9.5" y="29.5" width="3" height="2" fill="#8a8b8f"/></svg>
<div class="a" style="left:1568px;top:62px;width:280px;height:990px;background:#2b2c30"></div>
<div class="a" style="left:1575px;top:66px;width:272px;height:983px;background:#2b2c30;border:1px solid #3f4044"></div>
<div class="t" style="left:1582px;top:71px;font-size:12px;color:#e8e8e8">解决方案资源管理器</div>
<svg style="left:1699px;top:76px" width="87" height="7" viewBox="0 0 87 7"><g fill="#6a6b6f"><circle cx="0.5" cy="0.5" r=".55"/><circle cx="0.5" cy="3.0" r=".55"/><circle cx="0.5" cy="5.5" r=".55"/><circle cx="3.5" cy="0.5" r=".55"/><circle cx="3.5" cy="3.0" r=".55"/><circle cx="3.5" cy="5.5" r=".55"/><circle cx="6.5" cy="0.5" r=".55"/><circle cx="6.5" cy="3.0" r=".55"/><circle cx="6.5" cy="5.5" r=".55"/><circle cx="9.5" cy="0.5" r=".55"/><circle cx="9.5" cy="3.0" r=".55"/><circle cx="9.5" cy="5.5" r=".55"/><circle cx="12.5" cy="0.5" r=".55"/><circle cx="12.5" cy="3.0" r=".55"/><circle cx="12.5" cy="5.5" r=".55"/><circle cx="15.5" cy="0.5" r=".55"/><circle cx="15.5" cy="3.0" r=".55"/><circle cx="15.5" cy="5.5" r=".55"/><circle cx="18.5" cy="0.5" r=".55"/><circle cx="18.5" cy="3.0" r=".55"/><circle cx="18.5" cy="5.5" r=".55"/><circle cx="21.5" cy="0.5" r=".55"/><circle cx="21.5" cy="3.0" r=".55"/><circle cx="21.5" cy="5.5" r=".55"/><circle cx="24.5" cy="0.5" r=".55"/><circle cx="24.5" cy="3.0" r=".55"/><circle cx="24.5" cy="5.5" r=".55"/><circle cx="27.5" cy="0.5" r=".55"/><circle cx="27.5" cy="3.0" r=".55"/><circle cx="27.5" cy="5.5" r=".55"/><circle cx="30.5" cy="0.5" r=".55"/><circle cx="30.5" cy="3.0" r=".55"/><circle cx="30.5" cy="5.5" r=".55"/><circle cx="33.5" cy="0.5" r=".55"/><circle cx="33.5" cy="3.0" r=".55"/><circle cx="33.5" cy="5.5" r=".55"/><circle cx="36.5" cy="0.5" r=".55"/><circle cx="36.5" cy="3.0" r=".55"/><circle cx="36.5" cy="5.5" r=".55"/><circle cx="39.5" cy="0.5" r=".55"/><circle cx="39.5" cy="3.0" r=".55"/><circle cx="39.5" cy="5.5" r=".55"/><circle cx="42.5" cy="0.5" r=".55"/><circle cx="42.5" cy="3.0" r=".55"/><circle cx="42.5" cy="5.5" r=".55"/><circle cx="45.5" cy="0.5" r=".55"/><circle cx="45.5" cy="3.0" r=".55"/><circle cx="45.5" cy="5.5" r=".55"/><circle cx="48.5" cy="0.5" r=".55"/><circle cx="48.5" cy="3.0" r=".55"/><circle cx="48.5" cy="5.5" r=".55"/><circle cx="51.5" cy="0.5" r=".55"/><circle cx="51.5" cy="3.0" r=".55"/><circle cx="51.5" cy="5.5" r=".55"/><circle cx="54.5" cy="0.5" r=".55"/><circle cx="54.5" cy="3.0" r=".55"/><circle cx="54.5" cy="5.5" r=".55"/><circle cx="57.5" cy="0.5" r=".55"/><circle cx="57.5" cy="3.0" r=".55"/><circle cx="57.5" cy="5.5" r=".55"/><circle cx="60.5" cy="0.5" r=".55"/><circle cx="60.5" cy="3.0" r=".55"/><circle cx="60.5" cy="5.5" r=".55"/><circle cx="63.5" cy="0.5" r=".55"/><circle cx="63.5" cy="3.0" r=".55"/><circle cx="63.5" cy="5.5" r=".55"/><circle cx="66.5" cy="0.5" r=".55"/><circle cx="66.5" cy="3.0" r=".55"/><circle cx="66.5" cy="5.5" r=".55"/><circle cx="69.5" cy="0.5" r=".55"/><circle cx="69.5" cy="3.0" r=".55"/><circle cx="69.5" cy="5.5" r=".55"/><circle cx="72.5" cy="0.5" r=".55"/><circle cx="72.5" cy="3.0" r=".55"/><circle cx="72.5" cy="5.5" r=".55"/><circle cx="75.5" cy="0.5" r=".55"/><circle cx="75.5" cy="3.0" r=".55"/><circle cx="75.5" cy="5.5" r=".55"/><circle cx="78.5" cy="0.5" r=".55"/><circle cx="78.5" cy="3.0" r=".55"/><circle cx="78.5" cy="5.5" r=".55"/><circle cx="81.5" cy="0.5" r=".55"/><circle cx="81.5" cy="3.0" r=".55"/><circle cx="81.5" cy="5.5" r=".55"/><circle cx="84.5" cy="0.5" r=".55"/><circle cx="84.5" cy="3.0" r=".55"/><circle cx="84.5" cy="5.5" r=".55"/></g></svg>
<svg style="left:1792px;top:76px" width="10" height="6" viewBox="0 0 10 6"><path d="M.5 .5L5 5 9.5 .5" fill="none" stroke="#c8c8c8" stroke-width="1.1"/></svg>
<svg style="left:1811px;top:72px" width="9" height="12" viewBox="0 0 9 12"><path d="M2 .5H7M2.5 .5V6M6.5 .5V6M.5 6.5H8.5M4.5 6.5V11.5" fill="none" stroke="#d0d0d0" stroke-width="1.1"/><rect x="2.5" y="1" width="1.5" height="5" fill="#d0d0d0"/></svg>
<svg style="left:1829px;top:73px" width="10" height="10" viewBox="0 0 10 10"><path d="M.5 .5L9.5 9.5M9.5 .5L.5 9.5" stroke="#d0d0d0" stroke-width="1.1"/></svg>
<svg style="left:1583px;top:92px" width="6" height="23" viewBox="0 0 6 23"><g fill="#6a6b6f"><circle cx="1" cy="1" r=".55"/><circle cx="1" cy="4" r=".55"/><circle cx="1" cy="7" r=".55"/><circle cx="1" cy="10" r=".55"/><circle cx="1" cy="13" r=".55"/><circle cx="1" cy="16" r=".55"/><circle cx="1" cy="19" r=".55"/><circle cx="1" cy="22" r=".55"/><circle cx="4" cy="1" r=".55"/><circle cx="4" cy="4" r=".55"/><circle cx="4" cy="7" r=".55"/><circle cx="4" cy="10" r=".55"/><circle cx="4" cy="13" r=".55"/><circle cx="4" cy="16" r=".55"/><circle cx="4" cy="19" r=".55"/><circle cx="4" cy="22" r=".55"/></g></svg>
<svg style="left:1596px;top:96px" width="17" height="17" viewBox="0 0 17 17"><path d="M2.5 7A5 5 0 0 1 11.5 4.5M12.5 8A5 5 0 0 1 3.5 10.5" fill="none" stroke="#d0d0d0" stroke-width="1.3"/><path d="M11.8 1.5V5H8.3M3.2 13.5V10H6.7" fill="none" stroke="#d0d0d0" stroke-width="1.2"/><circle cx="13.5" cy="13.5" r="2.6" fill="#4cc85a"/></svg>
<div class="a" style="left:1618px;top:93px;width:1px;height:22px;background:#3f4044"></div>
<svg style="left:1624px;top:97px" width="14" height="15" viewBox="0 0 14 15"><path d="M13 4H2M5 1L2 4 5 7M1 11H12M9 8L12 11 9 14" fill="none" stroke="#3ba0f5" stroke-width="1.7"/></svg>
<svg style="left:1645px;top:96px" width="16" height="16" viewBox="0 0 16 16"><path d="M.6 12V.6H12" fill="none" stroke="#d0d0d0" stroke-width="1.1"/><rect x="3.5" y="3.5" width="12" height="12" fill="none" stroke="#d0d0d0" stroke-width="1.1"/><path d="M6.5 9.5H12.5" stroke="#d0d0d0" stroke-width="1.2"/></svg>
<svg style="left:1667px;top:94px" width="19" height="20" viewBox="0 0 19 20"><path d="M.6 14V.6H10" fill="none" stroke="#8a8a8a" stroke-width="1.1"/><path d="M2.6 16V2.6H12" fill="none" stroke="#9a9a9a" stroke-width="1.1"/><path d="M5 5H12.5L17.5 10V19H5Z" fill="none" stroke="#3ba0f5" stroke-width="1.4"/><path d="M12.5 5V10H17.5" fill="none" stroke="#3ba0f5" stroke-width="1.2"/></svg>
<div class="a" style="left:1691px;top:93px;width:1px;height:22px;background:#3f4044"></div>
<svg style="left:1697px;top:96px" width="16" height="16" viewBox="0 0 16 16"><path d="M10.5 1A4.3 4.3 0 0 0 6.8 7.2L1.3 12.7A1.4 1.4 0 0 0 3.3 14.7L8.8 9.2A4.3 4.3 0 0 0 15 5.5L12.5 6.5 10 4Z" fill="#3ba0f5"/></svg>
<div class="a" style="left:1718px;top:93px;width:1px;height:22px;background:#3f4044"></div>
<svg style="left:1723px;top:96px" width="19" height="15" viewBox="0 0 19 15"><path d="M1 12C3 6 8 5 12 6.5L11 2 18.5 6 13 12 12.5 9.5C8.5 8.5 4.5 9.5 1 12Z" fill="#3ba0f5"/></svg>
<svg style="left:1836px;top:106px" width="8" height="8" viewBox="0 0 8 8"><path d="M.5 .5H7.5M1 3.5L4 6.5 7 3.5" fill="none" stroke="#7a7a7a"/></svg>
<div class="a" style="left:1576px;top:118px;width:270px;height:1px;background:#46474b"></div>
<div class="a" style="left:1576px;top:119px;width:270px;height:23px;background:#1b1c1f"></div>
<div class="t" style="left:1586px;top:125px;font-size:12px;color:#8a8a8e">搜索解决方案资源管理器 (Ctrl+;)</div>
<svg style="left:1832px;top:128px" width="9" height="6" viewBox="0 0 9 6"><path d="M.5 .5L4.5 4.5 8.5 .5" fill="none" stroke="#c8c8c8" stroke-width="1.1"/></svg>
<div class="a" style="left:1576px;top:142px;width:270px;height:1px;background:#46474b"></div>
<div class="a" style="left:1576px;top:143px;width:270px;height:886px;background:#1f2023"></div>
<div class="a" style="left:1576px;top:959px;width:248px;height:24px;background:#3a3b3f"></div>
<svg style="left:1688px;top:147px" width="17" height="16" viewBox="0 0 17 16"><path d="M3 1H11.5L11 13.5C11 15 9.5 15.5 8.5 15H1.5C2.5 14.5 3 14 3 13Z" fill="none" stroke="#e8c26a" stroke-width="1.2"/><path d="M5 4.5H9M5 7H9" stroke="#e8c26a" stroke-width="1"/><path d="M9 9.5H16M14 7.5L16 9.5M16 12.5H9M11 14.5L9 12.5" fill="none" stroke="#3b9cf0" stroke-width="1.2"/></svg>
<div class="t" style="left:1709px;top:149px;font-size:12px;letter-spacing:0px;color:#e0e0e0">tsconfig.vitest.json</div>
<svg style="left:1688px;top:171px" width="14" height="16" viewBox="0 0 14 16"><path d="M3.5 .7H13.3V12.3H3.5Z" fill="none" stroke="#e8c26a" stroke-width="1.2"/><path d="M.7 3.5V15.3H10.5" fill="none" stroke="#e8c26a" stroke-width="1.2"/></svg>
<div class="t" style="left:1709px;top:173px;font-size:12px;letter-spacing:0px;color:#e0e0e0">uno.config.ts</div>
<svg style="left:1688px;top:195px" width="14" height="16" viewBox="0 0 14 16"><path d="M3.5 .7H13.3V12.3H3.5Z" fill="none" stroke="#e8c26a" stroke-width="1.2"/><path d="M.7 3.5V15.3H10.5" fill="none" stroke="#e8c26a" stroke-width="1.2"/></svg>
<div class="t" style="left:1709px;top:197px;font-size:12px;letter-spacing:0px;color:#e0e0e0">vite.config.ts</div>
<svg style="left:1688px;top:219px" width="14" height="16" viewBox="0 0 14 16"><path d="M3.5 .7H13.3V12.3H3.5Z" fill="none" stroke="#e8c26a" stroke-width="1.2"/><path d="M.7 3.5V15.3H10.5" fill="none" stroke="#e8c26a" stroke-width="1.2"/></svg>
<div class="t" style="left:1709px;top:221px;font-size:12px;letter-spacing:0px;color:#e0e0e0">vitest.config.ts</div>
<svg style="left:1603px;top:248px" width="9" height="6" viewBox="0 0 9 6"><path d="M.5 .8L4.5 4.8 8.5 .8" fill="none" stroke="#d0d0d0" stroke-width="1.1"/></svg>
<svg style="left:1627px;top:243px" width="17" height="16" viewBox="0 0 17 16"><path d="M8.5 .8L16 4.5 8.5 8.2 1 4.5Z" fill="#3b9cf0"/><path d="M1 8L8.5 11.7 16 8M1 11.5L8.5 15.2 16 11.5" fill="none" stroke="#3b9cf0" stroke-width="1.5"/></svg>
<div class="t" style="left:1649px;top:245px;font-size:12px;letter-spacing:-0.28px;color:#e0e0e0">FullStackDesigner4</div>
<svg style="left:1624px;top:271px" width="6" height="9" viewBox="0 0 6 9"><path d="M.8 .5L4.8 4.5 .8 8.5" fill="none" stroke="#d0d0d0" stroke-width="1.1"/></svg>
<svg style="left:1646px;top:267px" width="16" height="16" viewBox="0 0 16 16"><path d="M.7 2.5V15.3H13.5" fill="none" stroke="#3b9cf0" stroke-width="1.1"/><rect x="2.7" y=".7" width="12.6" height="12.6" fill="none" stroke="#3b9cf0" stroke-width="1.3"/><path d="M4.5 11.5L8 6.5 10 9 11.5 7.5 13.5 11.5Z" fill="#3b9cf0"/></svg>
<div class="t" style="left:1669px;top:269px;font-size:12px;letter-spacing:0px;color:#e0e0e0">本地资源</div>
<svg style="left:1623px;top:296px" width="9" height="6" viewBox="0 0 9 6"><path d="M.5 .8L4.5 4.8 8.5 .8" fill="none" stroke="#d0d0d0" stroke-width="1.1"/></svg>
<svg style="left:1646px;top:291px" width="17" height="16" viewBox="0 0 17 16"><path d="M8.50 7.80L5.38 6.00L5.38 2.40L8.50 0.60L11.62 2.40L11.62 6.00ZM4.60 14.80L1.48 13.00L1.48 9.40L4.60 7.60L7.72 9.40L7.72 13.00ZM12.40 14.80L9.28 13.00L9.28 9.40L12.40 7.60L15.52 9.40L15.52 13.00Z" fill="none" stroke="#4aa3f0" stroke-width="1.3"/></svg>
<div class="t" style="left:1669px;top:293px;font-size:12px;letter-spacing:0px;color:#e0e0e0">实体设计</div>
<svg style="left:1666px;top:315px" width="15" height="16" viewBox="0 0 15 16"><path d="M7.5 .8L14 4.5V11.5L7.5 15.2 1 11.5V4.5Z" fill="none" stroke="#3b9cf0" stroke-width="1.3"/><circle cx="7.5" cy="8" r="3" fill="#3b9cf0"/></svg>
<div class="t" style="left:1689px;top:317px;font-size:12px;letter-spacing:-0.28px;color:#e0e0e0">WeatherForecast.sde</div>
<svg style="left:1623px;top:344px" width="9" height="6" viewBox="0 0 9 6"><path d="M.5 .8L4.5 4.8 8.5 .8" fill="none" stroke="#d0d0d0" stroke-width="1.1"/></svg>
<svg style="left:1646px;top:339px" width="16" height="16" viewBox="0 0 16 16"><g fill="none" stroke="#3b9cf0" stroke-width="1.2"><path d="M1 1.5H5M3 1.5V4M6 4V14.5M6 5H9M6 9.5H9M6 14H9"/><rect x="9.5" y="3" width="5" height="3.5" rx="1.5"/><rect x="9.5" y="7.8" width="5" height="3.5" rx="1.5"/><rect x="9.5" y="12.3" width="5" height="3.5" rx="1.5"/><rect x=".8" y=".8" width="4" height="3.2"/></g></svg>
<div class="t" style="left:1669px;top:341px;font-size:12px;letter-spacing:0px;color:#e0e0e0">逻辑设计</div>
<svg style="left:1643px;top:368px" width="9" height="6" viewBox="0 0 9 6"><path d="M.5 .8L4.5 4.8 8.5 .8" fill="none" stroke="#d0d0d0" stroke-width="1.1"/></svg>
<svg style="left:1666px;top:364px" width="17" height="13" viewBox="0 0 17 13"><path d="M.7 12.3V1.2H6L7.5 2.8H13.5V5" fill="none" stroke="#e8c26a" stroke-width="1.2"/><path d="M.7 12.3L3.5 5.5H16.5L13.8 12.3Z" fill="#e8c26a"/></svg>
<div class="t" style="left:1689px;top:365px;font-size:12px;letter-spacing:0px;color:#e0e0e0">Department</div>
<svg style="left:1686px;top:388px" width="16" height="15" viewBox="0 0 16 15"><g fill="none" stroke="#78b6ee" stroke-width="1.1" stroke-linecap="round"><path d="M1.5 7.5H10.5M13 1.5H8.3Q6.8 1.5 6.8 3V12Q6.8 13.5 8.3 13.5H13"/></g><g fill="#78b6ee"><path d="M0 7.5L1.6 5.9 3.2 7.5 1.6 9.1Z"/><path d="M10.2 7.5L11.8 5.9 13.4 7.5 11.8 9.1Z"/><path d="M11.6 1.5L13.2 -.1 14.8 1.5 13.2 3.1Z"/><path d="M11.6 13.5L13.2 11.9 14.8 13.5 13.2 15.1Z"/></g></svg>
<div class="t" style="left:1709px;top:389px;font-size:12px;letter-spacing:0px;color:#e0e0e0">Department.sdlg</div>
<svg style="left:1644px;top:415px" width="6" height="9" viewBox="0 0 6 9"><path d="M.8 .5L4.8 4.5 .8 8.5" fill="none" stroke="#d0d0d0" stroke-width="1.1"/></svg>
<svg style="left:1666px;top:412px" width="16" height="13" viewBox="0 0 16 13"><path d="M.5 .8H6L7.5 2.5H15.5V12.5H.5Z" fill="#e8c26a"/></svg>
<div class="t" style="left:1689px;top:413px;font-size:12px;letter-spacing:0px;color:#e0e0e0">Table1</div>
<svg style="left:1666px;top:436px" width="16" height="15" viewBox="0 0 16 15"><g fill="none" stroke="#78b6ee" stroke-width="1.1" stroke-linecap="round"><path d="M1.5 7.5H10.5M13 1.5H8.3Q6.8 1.5 6.8 3V12Q6.8 13.5 8.3 13.5H13"/></g><g fill="#78b6ee"><path d="M0 7.5L1.6 5.9 3.2 7.5 1.6 9.1Z"/><path d="M10.2 7.5L11.8 5.9 13.4 7.5 11.8 9.1Z"/><path d="M11.6 1.5L13.2 -.1 14.8 1.5 13.2 3.1Z"/><path d="M11.6 13.5L13.2 11.9 14.8 13.5 13.2 15.1Z"/></g></svg>
<div class="t" style="left:1689px;top:437px;font-size:12px;letter-spacing:0px;color:#e0e0e0">Api.sdlg</div>
<svg style="left:1666px;top:460px" width="16" height="15" viewBox="0 0 16 15"><g fill="none" stroke="#78b6ee" stroke-width="1.1" stroke-linecap="round"><path d="M1.5 7.5H10.5M13 1.5H8.3Q6.8 1.5 6.8 3V12Q6.8 13.5 8.3 13.5H13"/></g><g fill="#78b6ee"><path d="M0 7.5L1.6 5.9 3.2 7.5 1.6 9.1Z"/><path d="M10.2 7.5L11.8 5.9 13.4 7.5 11.8 9.1Z"/><path d="M11.6 1.5L13.2 -.1 14.8 1.5 13.2 3.1Z"/><path d="M11.6 13.5L13.2 11.9 14.8 13.5 13.2 15.1Z"/></g></svg>
<div class="t" style="left:1689px;top:461px;font-size:12px;letter-spacing:0px;color:#e0e0e0">Api1.sdlg</div>
<svg style="left:1666px;top:484px" width="16" height="15" viewBox="0 0 16 15"><g fill="none" stroke="#78b6ee" stroke-width="1.1" stroke-linecap="round"><path d="M1.5 7.5H10.5M13 1.5H8.3Q6.8 1.5 6.8 3V12Q6.8 13.5 8.3 13.5H13"/></g><g fill="#78b6ee"><path d="M0 7.5L1.6 5.9 3.2 7.5 1.6 9.1Z"/><path d="M10.2 7.5L11.8 5.9 13.4 7.5 11.8 9.1Z"/><path d="M11.6 1.5L13.2 -.1 14.8 1.5 13.2 3.1Z"/><path d="M11.6 13.5L13.2 11.9 14.8 13.5 13.2 15.1Z"/></g></svg>
<div class="t" style="left:1689px;top:485px;font-size:12px;letter-spacing:0px;color:#e0e0e0">City.sdlg</div>
<svg style="left:1666px;top:508px" width="16" height="15" viewBox="0 0 16 15"><g fill="none" stroke="#78b6ee" stroke-width="1.1" stroke-linecap="round"><path d="M1.5 7.5H10.5M13 1.5H8.3Q6.8 1.5 6.8 3V12Q6.8 13.5 8.3 13.5H13"/></g><g fill="#78b6ee"><path d="M0 7.5L1.6 5.9 3.2 7.5 1.6 9.1Z"/><path d="M10.2 7.5L11.8 5.9 13.4 7.5 11.8 9.1Z"/><path d="M11.6 1.5L13.2 -.1 14.8 1.5 13.2 3.1Z"/><path d="M11.6 13.5L13.2 11.9 14.8 13.5 13.2 15.1Z"/></g></svg>
<div class="t" style="left:1689px;top:509px;font-size:12px;letter-spacing:-0.28px;color:#e0e0e0">WeatherForecast.sdlg</div>
<svg style="left:1623px;top:536px" width="9" height="6" viewBox="0 0 9 6"><path d="M.5 .8L4.5 4.8 8.5 .8" fill="none" stroke="#d0d0d0" stroke-width="1.1"/></svg>
<svg style="left:1646px;top:531px" width="17" height="15" viewBox="0 0 17 15"><rect x=".7" y=".7" width="15.6" height="13.6" fill="none" stroke="#3b9cf0" stroke-width="1.3"/><path d="M.7 3.5H16.3" stroke="#3b9cf0" stroke-width="1"/><path d="M3.5 9C5.5 6 11.5 6 13.5 9 11.5 12 5.5 12 3.5 9Z" fill="none" stroke="#3b9cf0" stroke-width="1.1"/><circle cx="8.5" cy="9" r="1.3" fill="#3b9cf0"/></svg>
<div class="t" style="left:1669px;top:533px;font-size:12px;letter-spacing:0px;color:#e0e0e0">视图设计</div>
<svg style="left:1643px;top:560px" width="9" height="6" viewBox="0 0 9 6"><path d="M.5 .8L4.5 4.8 8.5 .8" fill="none" stroke="#d0d0d0" stroke-width="1.1"/></svg>
<svg style="left:1666px;top:556px" width="17" height="13" viewBox="0 0 17 13"><path d="M.7 12.3V1.2H6L7.5 2.8H13.5V5" fill="none" stroke="#e8c26a" stroke-width="1.2"/><path d="M.7 12.3L3.5 5.5H16.5L13.8 12.3Z" fill="#e8c26a"/></svg>
<div class="t" style="left:1689px;top:557px;font-size:12px;letter-spacing:0px;color:#e0e0e0">Account</div>
<svg style="left:1687px;top:581px" width="15" height="13" viewBox="0 0 15 13"><rect x=".7" y=".7" width="13.6" height="11.6" fill="#0b1b30" stroke="#86bff0" stroke-width="1.2"/><rect x="3.3" y="3" width="2.6" height="3.6" fill="none" stroke="#86bff0" stroke-width="1"/><path d="M7.3 3.6H11M7.3 6.2H11" stroke="#86bff0" stroke-width="1.2"/><rect x="3.3" y="8.2" width="7.7" height="2.2" fill="none" stroke="#86bff0" stroke-width="1"/></svg>
<div class="t" style="left:1709px;top:581px;font-size:12px;letter-spacing:0px;color:#e0e0e0">Login.sdv</div>
<svg style="left:1687px;top:605px" width="15" height="13" viewBox="0 0 15 13"><rect x=".7" y=".7" width="13.6" height="11.6" fill="#0b1b30" stroke="#86bff0" stroke-width="1.2"/><rect x="3.3" y="3" width="2.6" height="3.6" fill="none" stroke="#86bff0" stroke-width="1"/><path d="M7.3 3.6H11M7.3 6.2H11" stroke="#86bff0" stroke-width="1.2"/><rect x="3.3" y="8.2" width="7.7" height="2.2" fill="none" stroke="#86bff0" stroke-width="1"/></svg>
<div class="t" style="left:1709px;top:605px;font-size:12px;letter-spacing:0px;color:#e0e0e0">Register.sdv</div>
<svg style="left:1643px;top:632px" width="9" height="6" viewBox="0 0 9 6"><path d="M.5 .8L4.5 4.8 8.5 .8" fill="none" stroke="#d0d0d0" stroke-width="1.1"/></svg>
<svg style="left:1666px;top:628px" width="17" height="13" viewBox="0 0 17 13"><path d="M.7 12.3V1.2H6L7.5 2.8H13.5V5" fill="none" stroke="#e8c26a" stroke-width="1.2"/><path d="M.7 12.3L3.5 5.5H16.5L13.8 12.3Z" fill="#e8c26a"/></svg>
<div class="t" style="left:1689px;top:629px;font-size:12px;letter-spacing:0px;color:#e0e0e0">Table1</div>
<svg style="left:1687px;top:653px" width="15" height="13" viewBox="0 0 15 13"><rect x=".7" y=".7" width="13.6" height="11.6" fill="#0b1b30" stroke="#86bff0" stroke-width="1.2"/><rect x="3.3" y="3" width="2.6" height="3.6" fill="none" stroke="#86bff0" stroke-width="1"/><path d="M7.3 3.6H11M7.3 6.2H11" stroke="#86bff0" stroke-width="1.2"/><rect x="3.3" y="8.2" width="7.7" height="2.2" fill="none" stroke="#86bff0" stroke-width="1"/></svg>
<div class="t" style="left:1709px;top:653px;font-size:12px;letter-spacing:0px;color:#e0e0e0">AddOrUpdate.sdv</div>
<svg style="left:1687px;top:677px" width="15" height="13" viewBox="0 0 15 13"><rect x=".7" y=".7" width="13.6" height="11.6" fill="#0b1b30" stroke="#86bff0" stroke-width="1.2"/><rect x="3.3" y="3" width="2.6" height="3.6" fill="none" stroke="#86bff0" stroke-width="1"/><path d="M7.3 3.6H11M7.3 6.2H11" stroke="#86bff0" stroke-width="1.2"/><rect x="3.3" y="8.2" width="7.7" height="2.2" fill="none" stroke="#86bff0" stroke-width="1"/></svg>
<div class="t" style="left:1709px;top:677px;font-size:12px;letter-spacing:0px;color:#e0e0e0">Detail.sdv</div>
<svg style="left:1687px;top:701px" width="15" height="13" viewBox="0 0 15 13"><rect x=".7" y=".7" width="13.6" height="11.6" fill="#0b1b30" stroke="#86bff0" stroke-width="1.2"/><rect x="3.3" y="3" width="2.6" height="3.6" fill="none" stroke="#86bff0" stroke-width="1"/><path d="M7.3 3.6H11M7.3 6.2H11" stroke="#86bff0" stroke-width="1.2"/><rect x="3.3" y="8.2" width="7.7" height="2.2" fill="none" stroke="#86bff0" stroke-width="1"/></svg>
<div class="t" style="left:1709px;top:701px;font-size:12px;letter-spacing:0px;color:#e0e0e0">List.sdv</div>
<svg style="left:1643px;top:728px" width="9" height="6" viewBox="0 0 9 6"><path d="M.5 .8L4.5 4.8 8.5 .8" fill="none" stroke="#d0d0d0" stroke-width="1.1"/></svg>
<svg style="left:1666px;top:724px" width="17" height="13" viewBox="0 0 17 13"><path d="M.7 12.3V1.2H6L7.5 2.8H13.5V5" fill="none" stroke="#e8c26a" stroke-width="1.2"/><path d="M.7 12.3L3.5 5.5H16.5L13.8 12.3Z" fill="#e8c26a"/></svg>
<div class="t" style="left:1689px;top:725px;font-size:12px;letter-spacing:0px;color:#e0e0e0">Test</div>
<svg style="left:1687px;top:749px" width="15" height="13" viewBox="0 0 15 13"><rect x=".7" y=".7" width="13.6" height="11.6" fill="#0b1b30" stroke="#86bff0" stroke-width="1.2"/><rect x="3.3" y="3" width="2.6" height="3.6" fill="none" stroke="#86bff0" stroke-width="1"/><path d="M7.3 3.6H11M7.3 6.2H11" stroke="#86bff0" stroke-width="1.2"/><rect x="3.3" y="8.2" width="7.7" height="2.2" fill="none" stroke="#86bff0" stroke-width="1"/></svg>
<div class="t" style="left:1709px;top:749px;font-size:12px;letter-spacing:0px;color:#e0e0e0">View.sdv</div>
<svg style="left:1643px;top:776px" width="9" height="6" viewBox="0 0 9 6"><path d="M.5 .8L4.5 4.8 8.5 .8" fill="none" stroke="#d0d0d0" stroke-width="1.1"/></svg>
<svg style="left:1666px;top:772px" width="17" height="13" viewBox="0 0 17 13"><path d="M.7 12.3V1.2H6L7.5 2.8H13.5V5" fill="none" stroke="#e8c26a" stroke-width="1.2"/><path d="M.7 12.3L3.5 5.5H16.5L13.8 12.3Z" fill="#e8c26a"/></svg>
<div class="t" style="left:1689px;top:773px;font-size:12px;letter-spacing:-0.28px;color:#e0e0e0">WeatherForecast</div>
<svg style="left:1663px;top:800px" width="9" height="6" viewBox="0 0 9 6"><path d="M.5 .8L4.5 4.8 8.5 .8" fill="none" stroke="#d0d0d0" stroke-width="1.1"/></svg>
<svg style="left:1686px;top:796px" width="17" height="13" viewBox="0 0 17 13"><path d="M.7 12.3V1.2H6L7.5 2.8H13.5V5" fill="none" stroke="#e8c26a" stroke-width="1.2"/><path d="M.7 12.3L3.5 5.5H16.5L13.8 12.3Z" fill="#e8c26a"/></svg>
<div class="t" style="left:1709px;top:797px;font-size:12px;letter-spacing:0px;color:#e0e0e0">component</div>
<svg style="left:1707px;top:821px" width="15" height="13" viewBox="0 0 15 13"><rect x=".7" y=".7" width="13.6" height="11.6" fill="#0b1b30" stroke="#86bff0" stroke-width="1.2"/><rect x="3.3" y="3" width="2.6" height="3.6" fill="none" stroke="#86bff0" stroke-width="1"/><path d="M7.3 3.6H11M7.3 6.2H11" stroke="#86bff0" stroke-width="1.2"/><rect x="3.3" y="8.2" width="7.7" height="2.2" fill="none" stroke="#86bff0" stroke-width="1"/></svg>
<div class="t" style="left:1729px;top:821px;font-size:12px;letter-spacing:0px;color:#e0e0e0">InfoCard.sdv</div>
<svg style="left:1687px;top:845px" width="15" height="13" viewBox="0 0 15 13"><rect x=".7" y=".7" width="13.6" height="11.6" fill="#0b1b30" stroke="#86bff0" stroke-width="1.2"/><rect x="3.3" y="3" width="2.6" height="3.6" fill="none" stroke="#86bff0" stroke-width="1"/><path d="M7.3 3.6H11M7.3 6.2H11" stroke="#86bff0" stroke-width="1.2"/><rect x="3.3" y="8.2" width="7.7" height="2.2" fill="none" stroke="#86bff0" stroke-width="1"/></svg>
<div class="t" style="left:1709px;top:845px;font-size:12px;letter-spacing:0px;color:#e0e0e0">City.sdv</div>
<svg style="left:1687px;top:869px" width="15" height="13" viewBox="0 0 15 13"><rect x=".7" y=".7" width="13.6" height="11.6" fill="#0b1b30" stroke="#86bff0" stroke-width="1.2"/><rect x="3.3" y="3" width="2.6" height="3.6" fill="none" stroke="#86bff0" stroke-width="1"/><path d="M7.3 3.6H11M7.3 6.2H11" stroke="#86bff0" stroke-width="1.2"/><rect x="3.3" y="8.2" width="7.7" height="2.2" fill="none" stroke="#86bff0" stroke-width="1"/></svg>
<div class="t" style="left:1709px;top:869px;font-size:12px;letter-spacing:0px;color:#e0e0e0">CreateOrEdit.sdv</div>
<svg style="left:1687px;top:893px" width="15" height="13" viewBox="0 0 15 13"><rect x=".7" y=".7" width="13.6" height="11.6" fill="#0b1b30" stroke="#86bff0" stroke-width="1.2"/><rect x="3.3" y="3" width="2.6" height="3.6" fill="none" stroke="#86bff0" stroke-width="1"/><path d="M7.3 3.6H11M7.3 6.2H11" stroke="#86bff0" stroke-width="1.2"/><rect x="3.3" y="8.2" width="7.7" height="2.2" fill="none" stroke="#86bff0" stroke-width="1"/></svg>
<div class="t" style="left:1709px;top:893px;font-size:12px;letter-spacing:0px;color:#e0e0e0">List.sdv</div>
<svg style="left:1687px;top:917px" width="15" height="13" viewBox="0 0 15 13"><rect x=".7" y=".7" width="13.6" height="11.6" fill="#0b1b30" stroke="#86bff0" stroke-width="1.2"/><rect x="3.3" y="3" width="2.6" height="3.6" fill="none" stroke="#86bff0" stroke-width="1"/><path d="M7.3 3.6H11M7.3 6.2H11" stroke="#86bff0" stroke-width="1.2"/><rect x="3.3" y="8.2" width="7.7" height="2.2" fill="none" stroke="#86bff0" stroke-width="1"/></svg>
<div class="t" style="left:1709px;top:917px;font-size:12px;letter-spacing:0px;color:#e0e0e0">Statistics.sdv</div>
<svg style="left:1687px;top:941px" width="15" height="13" viewBox="0 0 15 13"><rect x=".7" y=".7" width="13.6" height="11.6" fill="#0b1b30" stroke="#86bff0" stroke-width="1.2"/><rect x="3.3" y="3" width="2.6" height="3.6" fill="none" stroke="#86bff0" stroke-width="1"/><path d="M7.3 3.6H11M7.3 6.2H11" stroke="#86bff0" stroke-width="1.2"/><rect x="3.3" y="8.2" width="7.7" height="2.2" fill="none" stroke="#86bff0" stroke-width="1"/></svg>
<div class="t" style="left:1709px;top:941px;font-size:12px;letter-spacing:0px;color:#e0e0e0">View.sdv</div>
<svg style="left:1667px;top:965px" width="15" height="13" viewBox="0 0 15 13"><rect x=".7" y=".7" width="13.6" height="11.6" fill="#0b1b30" stroke="#86bff0" stroke-width="1.2"/><rect x="3.3" y="3" width="2.6" height="3.6" fill="none" stroke="#86bff0" stroke-width="1"/><path d="M7.3 3.6H11M7.3 6.2H11" stroke="#86bff0" stroke-width="1.2"/><rect x="3.3" y="8.2" width="7.7" height="2.2" fill="none" stroke="#86bff0" stroke-width="1"/></svg>
<div class="t" style="left:1689px;top:965px;font-size:12px;letter-spacing:0px;color:#e0e0e0">Home.sdv</div>
<svg style="left:1667px;top:989px" width="15" height="13" viewBox="0 0 15 13"><rect x=".7" y=".7" width="13.6" height="11.6" fill="#0b1b30" stroke="#86bff0" stroke-width="1.2"/><rect x="3.3" y="3" width="2.6" height="3.6" fill="none" stroke="#86bff0" stroke-width="1"/><path d="M7.3 3.6H11M7.3 6.2H11" stroke="#86bff0" stroke-width="1.2"/><rect x="3.3" y="8.2" width="7.7" height="2.2" fill="none" stroke="#86bff0" stroke-width="1"/></svg>
<div class="t" style="left:1689px;top:989px;font-size:12px;letter-spacing:0px;color:#e0e0e0">Layout.sdv</div>
<svg style="left:1831px;top:148px" width="10" height="6" viewBox="0 0 10 6"><path d="M.5 5.5L5 1 9.5 5.5" fill="none" stroke="#c0c0c0" stroke-width="1.1"/></svg>
<div class="a" style="left:1830px;top:775px;width:9px;height:237px;background:#4a4b4f"></div>
<svg style="left:1831px;top:1017px" width="10" height="6" viewBox="0 0 10 6"><path d="M.5 .5L5 5 9.5 .5" fill="none" stroke="#c0c0c0" stroke-width="1.1"/></svg>
<div class="a" style="left:1694px;top:1028px;width:152px;height:1px;background:#46474b"></div>
<div class="a" style="left:1576px;top:1029px;width:118px;height:20px;background:#1f2023;border-right:1px solid #46474b;border-bottom:1px solid #46474b"></div>
<div class="t" style="left:1581px;top:1033px;font-size:12px;color:#3b9cf0">解决方案资源管理器</div>
<div class="t" style="left:1701px;top:1033px;font-size:12px;color:#d0d0d0">AI助手</div>
<div class="a" style="left:0;top:1048px;width:1848px;height:1px;background:#46474b"></div>
<div class="a" style="left:0;top:1049px;width:1848px;height:7px;background:#2b2c30"></div>
<div class="a" style="left:0;top:1056px;width:1848px;height:22px;background:#0770c4"></div>
<div class="a" style="left:0;top:1078px;width:1848px;height:2px;background:#5a5650"></div>
<svg style="left:0;top:1060px" width="16" height="14" viewBox="0 0 16 14"><path d="M0 .7H14.3V13.3H0" fill="none" stroke="#ffffff" stroke-width="1.3"/></svg>
<div class="t" style="left:23px;top:1062px;font-size:11px;color:#ffffff">就绪</div>
<svg style="left:1719px;top:1060px" width="11" height="13" viewBox="0 0 11 13"><path d="M5.5 13V1.5M1 6L5.5 1.2 10 6" fill="none" stroke="#ffffff" stroke-width="2.2"/></svg>
<div class="t" style="left:1737px;top:1062px;font-size:11px;color:#ffffff">添加到源代码管理</div>
<svg style="left:1830px;top:1066px" width="7" height="4" viewBox="0 0 7 4"><path d="M.5 .5L3.5 3.5 6.5 .5" fill="none" stroke="#d8e8f8" stroke-width="1"/></svg>
<div class="a" style="left:1848px;top:0;width:5px;height:1080px;background:#ffffff"></div>
</body></html>
